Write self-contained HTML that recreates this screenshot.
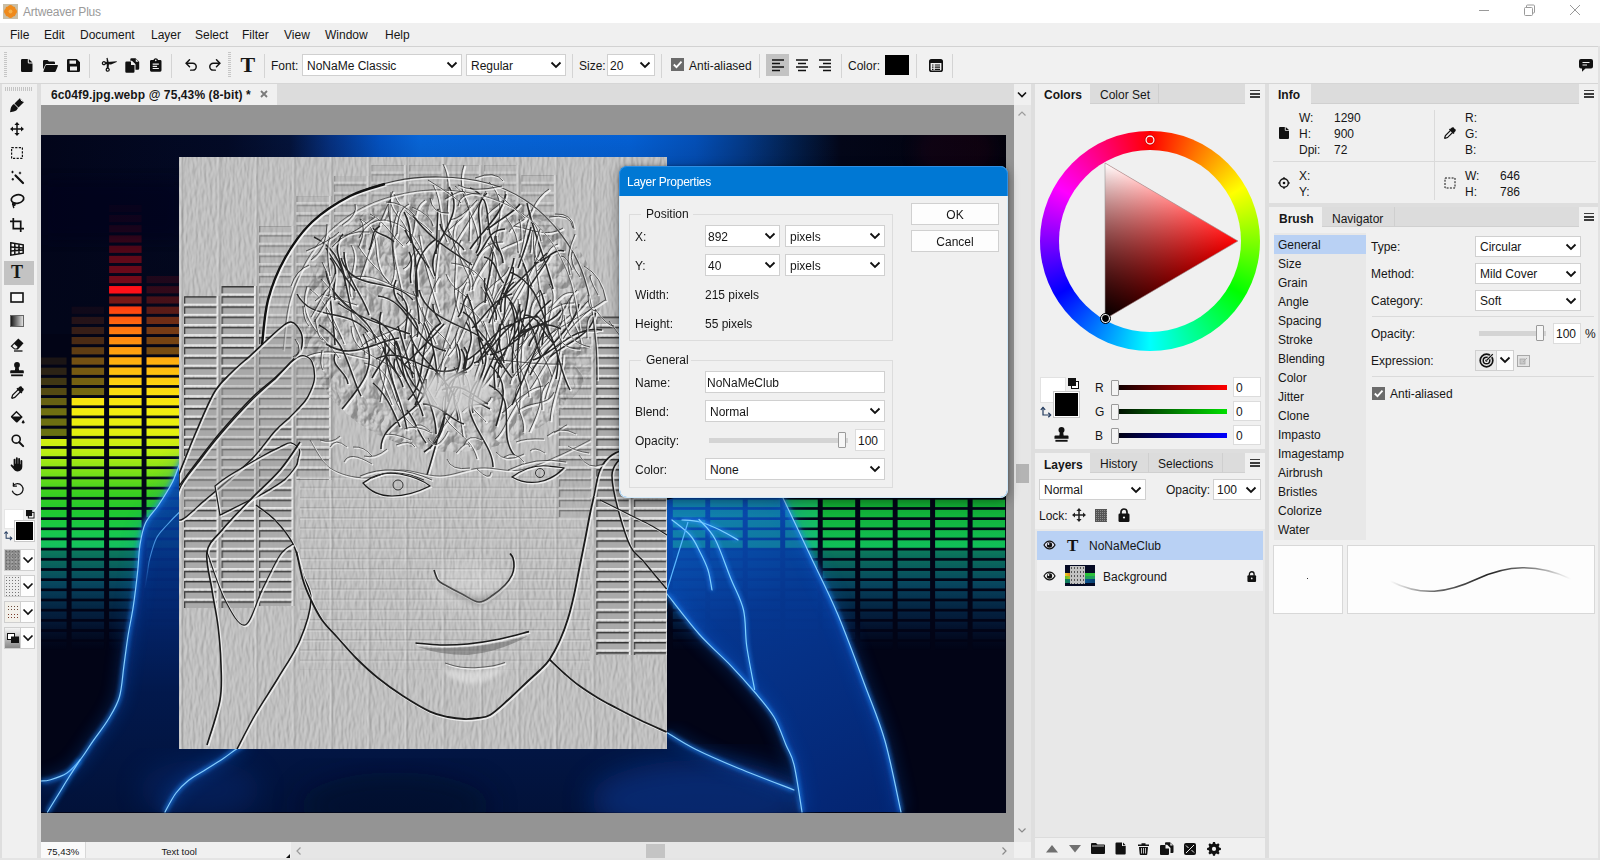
<!DOCTYPE html>
<html lang="en">
<head>
<meta charset="utf-8">
<title>Artweaver Plus</title>
<style>
*{box-sizing:border-box;margin:0;padding:0}
html,body{width:1600px;height:860px;overflow:hidden;background:#f0f0f0}
body{position:relative;font-family:"Liberation Sans",sans-serif;font-size:12px;color:#161616;line-height:12px}
.a{position:absolute}
.t{position:absolute;white-space:nowrap;line-height:12px;font-size:12px}
.b{font-weight:bold}
svg{position:absolute;overflow:visible}
.sep{position:absolute;width:1px;background:#d4d4d4}
.dd{position:absolute;background:#fff;border:1px solid #d0d0d0}
.dd .t{left:4px}
.chev{position:absolute;right:3px;top:50%;width:12px;height:8px;margin-top:-4px}
.tabbar{position:absolute;background:#dcdcdc;height:20px;border-bottom:1px solid #d0d0d0}
.tab{position:absolute;top:0;height:20px;border-right:1px solid #cfcfcf}
.tabon{position:absolute;top:0;height:21px;background:#f0f0f0}
.ham{position:absolute;width:10px;height:8px;background:linear-gradient(#3c3c3c 0 1.500px,transparent 1.500px 3.250px,#3c3c3c 3.250px 4.750px,transparent 4.750px 6.500px,#3c3c3c 6.500px 8px)}
</style>
</head>
<body>
<!-- title bar -->
<div class="a" style="left:0;top:0;width:1600px;height:23px;background:#fff"></div>
<svg style="left:3px;top:4px" width="15" height="15" viewBox="0 0 17 17"><rect width="17" height="17" fill="#c9bea6"/><g fill="#ef8a1c"><circle cx="8.5" cy="4.2" r="3"/><circle cx="8.5" cy="12.8" r="3"/><circle cx="4.2" cy="8.5" r="3"/><circle cx="12.8" cy="8.5" r="3"/><circle cx="5.4" cy="5.4" r="2.6"/><circle cx="11.6" cy="5.4" r="2.6"/><circle cx="5.4" cy="11.6" r="2.6"/><circle cx="11.6" cy="11.6" r="2.6"/></g><circle cx="8.5" cy="8.5" r="2.2" fill="#f6b04a"/></svg>
<div class="t" style="left:23px;top:6px;color:#9a9a9a;font-size:12px;letter-spacing:-.2px">Artweaver Plus</div>
<svg style="left:1476px;top:2px" width="110" height="18" viewBox="0 0 110 18" fill="none" stroke="#9a9a9a" stroke-width="1"><path d="M3 8.5h10"/><rect x="48.5" y="5.5" width="8" height="8" rx="1"/><path d="M50.5 5.5v-1.5a1 1 0 0 1 1-1h6a1 1 0 0 1 1 1v6a1 1 0 0 1-1 1h-1"/><path d="M94 3l10 10M104 3l-10 10"/></svg>
<!-- menu bar -->
<div class="a" style="left:0;top:23px;width:1600px;height:23px;background:#f0f0f0"></div>
<div class="t" style="left:10px;top:29px">File</div>
<div class="t" style="left:44px;top:29px">Edit</div>
<div class="t" style="left:80px;top:29px">Document</div>
<div class="t" style="left:151px;top:29px">Layer</div>
<div class="t" style="left:195px;top:29px">Select</div>
<div class="t" style="left:242px;top:29px">Filter</div>
<div class="t" style="left:284px;top:29px">View</div>
<div class="t" style="left:325px;top:29px">Window</div>
<div class="t" style="left:385px;top:29px">Help</div>
<!-- toolbar -->
<div class="a" style="left:0;top:46px;width:1600px;height:1px;background:#d2d2d2"></div>
<div class="a" style="left:0;top:47px;width:1600px;height:36px;background:#f1f1f1"></div>
<div class="a" style="left:0;top:83px;width:1600px;height:1px;background:#d6d6d6"></div>
<div class="a" style="left:4px;top:52px;width:3px;height:26px;background:repeating-linear-gradient(#c6c6c6 0 1px,transparent 1px 2px)"></div>
<div class="a" style="left:228px;top:52px;width:3px;height:26px;background:repeating-linear-gradient(#c6c6c6 0 1px,transparent 1px 2px)"></div>
<!-- new/open/save -->
<svg style="left:21px;top:59px" width="12" height="13" viewBox="0 0 12 13"><path d="M1.2 0h5.6v3.6a.8.8 0 0 0 .8.8H11.5v7.4a1.2 1.2 0 0 1-1.2 1.2H1.2A1.2 1.2 0 0 1 0 11.800V1.2A1.200 1.200 0 0 1 1.2 0z M7.800 0l3.700 3.500H7.800z" fill="#111"/></svg>
<svg style="left:43px;top:60px" width="15" height="12" viewBox="0 0 15 12"><path d="M0 1.200A1.200 1.200 0 0 1 1.200 0h3.300l1.500 1.500h4.800a1.200 1.200 0 0 1 1.200 1.200V4H3.600a1.500 1.500 0 0 0-1.400.9L0 9.500z M3.400 5h10.800a.7.700 0 0 1 .65 1l-2.100 5.200a1.200 1.200 0 0 1-1.100.8H.9a.5.500 0 0 1-.45-.7l2-5.600A1 1 0 0 1 3.400 5z" fill="#111"/></svg>
<svg style="left:67px;top:59px" width="13" height="13" viewBox="0 0 13 13"><path d="M1.300 0h8.500L13 3.200v8.500A1.300 1.300 0 0 1 11.700 13H1.300A1.300 1.300 0 0 1 0 11.700V1.300A1.300 1.300 0 0 1 1.300 0z M2.500 1.500v3.200h6.500V1.500z M3 7.500v4h7v-4z" fill="#111" fill-rule="evenodd"/></svg>
<div class="sep" style="left:89px;top:54px;height:24px"></div>
<!-- cut/copy/paste -->
<svg style="left:102px;top:58px" width="15" height="14" viewBox="0 0 15 14"><path d="M2.500 4.200L14.500 3.200a.5.500 0 0 1 .2.900L9 6.500 2.500 6z" fill="#111"/><path d="M4.700.2a.5.500 0 0 1 .9-.1L7 5.500 6.500 11 4.800 10.500z" fill="#111"/><circle cx="1.900" cy="5.200" r="1.500" fill="#f1f1f1" stroke="#111" stroke-width="1.300"/><circle cx="5.700" cy="11.700" r="1.500" fill="#f1f1f1" stroke="#111" stroke-width="1.300"/></svg>
<svg style="left:125px;top:58px" width="15" height="15" viewBox="0 0 15 15"><path d="M1.500 3.500h4.500v3.500h3.500v6.500a1.200 1.200 0 0 1-1.200 1.200H1.500A1.200 1.200 0 0 1 .3 13.500V4.700A1.200 1.200 0 0 1 1.500 3.500z" fill="#111"/><path d="M6.500.3h4l3.700 3.500v6.700a1.200 1.200 0 0 1-1.200 1.200h-2.500V6.300L6.800 2.800H5.300V1.500A1.200 1.200 0 0 1 6.500.3z" fill="#111"/><path d="M7 3.200l2.800 2.800H7z M10.800 1l2.800 2.700h-2.800z" fill="#f1f1f1"/></svg>
<svg style="left:149.500px;top:58px" width="11.500" height="14" viewBox="0 0 13 15"><path d="M1.500 1.800h2.300a2.800 2.800 0 0 1 5.400 0h2.300A1.500 1.500 0 0 1 13 3.300v10.200A1.500 1.500 0 0 1 11.500 15h-10A1.500 1.500 0 0 1 0 13.500V3.300A1.500 1.500 0 0 1 1.500 1.800z" fill="#111"/><circle cx="6.500" cy="2.300" r=".9" fill="#f1f1f1"/><path d="M3 6.500h7M3 9h5M3 11.500h7" stroke="#f1f1f1" stroke-width="1.300"/></svg>
<div class="sep" style="left:171px;top:54px;height:24px"></div>
<!-- undo / redo -->
<svg style="left:184.500px;top:59px" width="13" height="12" viewBox="0 0 15 14" fill="none" stroke="#111" stroke-width="1.700" stroke-linecap="round" stroke-linejoin="round"><path d="M5.200 1L1.200 5l4 4"/><path d="M1.500 5h7.500a4 4 0 0 1 0 8H6.500"/></svg>
<svg style="left:207.500px;top:59px" width="13" height="12" viewBox="0 0 15 14" fill="none" stroke="#111" stroke-width="1.700" stroke-linecap="round" stroke-linejoin="round"><path d="M9.800 1l4 4l-4 4"/><path d="M13.500 5H6a4 4 0 0 0 0 8h2.500"/></svg>
<!-- T -->
<div class="t" style="left:240.500px;top:54px;font-family:'Liberation Serif',serif;font-weight:bold;font-size:22px;line-height:22px">T</div>
<div class="sep" style="left:264px;top:54px;height:24px"></div>
<div class="t" style="left:271px;top:60px">Font:</div>
<div class="dd" style="left:302px;top:54px;width:160px;height:22px"><div class="t" style="top:5px">NoNaMe Classic</div><svg class="chev" viewBox="0 0 12 8"><path d="M1.500 1.500L6 6l4.500-4.500" fill="none" stroke="#111" stroke-width="1.800"/></svg></div>
<div class="dd" style="left:466px;top:54px;width:100px;height:22px"><div class="t" style="top:5px">Regular</div><svg class="chev" viewBox="0 0 12 8"><path d="M1.500 1.500L6 6l4.500-4.500" fill="none" stroke="#111" stroke-width="1.800"/></svg></div>
<div class="sep" style="left:572px;top:54px;height:24px"></div>
<div class="t" style="left:579px;top:60px">Size:</div>
<div class="dd" style="left:607px;top:54px;width:48px;height:22px"><div class="t" style="top:5px;left:2px">20</div><svg class="chev" style="right:3px" viewBox="0 0 12 8"><path d="M1.500 1.500L6 6l4.500-4.500" fill="none" stroke="#111" stroke-width="1.800"/></svg></div>
<div class="sep" style="left:661px;top:54px;height:24px"></div>
<div class="a" style="left:671px;top:58px;width:13px;height:13px;background:#6b6b6b"></div>
<svg style="left:671px;top:58px" width="13" height="13" viewBox="0 0 13 13"><path d="M2.800 6.500l2.700 2.700l5-5.500" fill="none" stroke="#fff" stroke-width="1.800"/></svg>
<div class="t" style="left:689px;top:60px">Anti-aliased</div>
<div class="sep" style="left:759px;top:54px;height:24px"></div>
<div class="a" style="left:766px;top:54px;width:23px;height:22px;background:#c3c3c3"></div>
<svg style="left:772px;top:59px" width="60" height="13" viewBox="0 0 60 13" stroke="#111" stroke-width="1.500"><path d="M0 1h12M0 4.500h8M0 8h12M0 11.500h8"/><path d="M24 1h12M26 4.500h8M24 8h12M26 11.500h8"/><path d="M47 1h12M51 4.500h8M47 8h12M51 11.500h8"/></svg>
<div class="sep" style="left:841px;top:54px;height:24px"></div>
<div class="t" style="left:848px;top:60px">Color:</div>
<div class="a" style="left:885px;top:54.500px;width:24px;height:20.700px;background:#000"></div>
<div class="sep" style="left:916px;top:54px;height:24px"></div>
<svg style="left:929px;top:59px" width="14" height="13" viewBox="0 0 14 13"><rect x=".8" y=".8" width="12.400" height="11.400" rx="1.800" fill="none" stroke="#111" stroke-width="1.600"/><rect x=".8" y=".8" width="12.400" height="3.200" fill="#111"/><path d="M3 6h1.500M5.800 6h5.200M3 8.200h1.500M5.800 8.200h5.200M3 10.300h1.500M5.800 10.300h5.200" stroke="#111" stroke-width="1.200"/></svg>
<div class="sep" style="left:952px;top:54px;height:24px"></div>
<svg style="left:1579px;top:59px" width="14" height="13" viewBox="0 0 14 13"><path d="M2 0h10a2 2 0 0 1 2 2v5.500a2 2 0 0 1-2 2H6.500L3 12.800V9.500H2a2 2 0 0 1-2-2V2A2 2 0 0 1 2 0z" fill="#111"/><path d="M3.500 3.500h7M3.500 6h4.500" stroke="#f1f1f1" stroke-width="1.200"/></svg>
<!-- left tool panel -->
<div class="a" style="left:0;top:84px;width:41px;height:776px;background:#dedede"></div>
<div class="a" style="left:2px;top:84px;width:35px;height:776px;background:#f0f0f0"></div>
<div class="a" style="left:5px;top:87px;width:27px;height:4px;background:repeating-linear-gradient(90deg,#c4c4c4 0 1px,transparent 1px 2px)"></div>
<div class="a" style="left:4px;top:261px;width:30px;height:24px;background:#c3c3c3"></div>
<!-- brush -->
<svg style="left:9px;top:97px" width="16" height="16" viewBox="0 0 16 16"><path d="M10.800 1.200l4 4-5.300 5.300-4-4z" fill="#111"/><path d="M5 7l4 4c-.8 2-2.500 3.200-4.200 3.500L1 15.200l.7-3.800C2 9.700 3.200 8 5 7z" fill="#111"/><path d="M11.500 2.500l2 2" stroke="#f0f0f0" stroke-width="1"/></svg>
<!-- move -->
<svg style="left:10px;top:122px" width="14" height="14" viewBox="0 0 14 14" fill="#111"><path d="M7 0l2.600 3h-5.200z M7 14l2.600-3h-5.200z M0 7l3-2.600v5.200z M14 7l-3-2.600v5.200z"/><path d="M7 2.500v9M2.500 7h9" stroke="#111" stroke-width="1.500"/></svg>
<!-- marquee -->
<svg style="left:11px;top:147px" width="12" height="12" viewBox="0 0 12 12"><rect x=".6" y=".6" width="10.800" height="10.800" fill="none" stroke="#111" stroke-width="1.200" stroke-dasharray="2.200 1.400"/></svg>
<!-- wand -->
<svg style="left:10px;top:170px" width="15" height="15" viewBox="0 0 15 15"><path d="M5.500 5.500l7.500 7.500" stroke="#111" stroke-width="2.200" stroke-linecap="round"/><path d="M2.500 0.800v2.400M1.300 2h2.400M10 1.800v2.400M8.800 3h2.400M2.800 8v2.400M1.600 9.200h2.400" stroke="#111" stroke-width="1.100"/></svg>
<!-- lasso -->
<svg style="left:9px;top:193px" width="16" height="16" viewBox="0 0 16 16" fill="none" stroke="#111" stroke-width="1.700"><ellipse cx="8.500" cy="6" rx="6.300" ry="4.200" transform="rotate(-12 8.500 6)"/><path d="M4.500 9.500c-1.500 1.500-1 3 .5 3s1.500-2 0-2.500c-1 1.500-1 3.500 0 5" stroke-width="1.400"/></svg>
<!-- crop -->
<svg style="left:10px;top:218px" width="14" height="14" viewBox="0 0 14 14" fill="none" stroke="#111" stroke-width="1.700"><path d="M3.300 0v10.700H14"/><path d="M0 3.300h10.700V14"/></svg>
<!-- perspective grid -->
<svg style="left:10px;top:242px" width="14" height="14" viewBox="0 0 14 14" fill="none" stroke="#111" stroke-width="1.500"><path d="M.8 .8L13.200 2.800v8.400L.8 13.200z"/><path d="M4.800 1.500v11M9 2.200v9.600M.8 4.900l12.400 1M.8 9.100l12.400-1"/></svg>
<!-- T -->
<div class="t" style="left:11px;top:263px;font-family:'Liberation Serif',serif;font-weight:bold;font-size:18px;line-height:18px">T</div>
<!-- rect -->
<svg style="left:10px;top:292px" width="14" height="11" viewBox="0 0 14 11"><rect x="1" y="1" width="12" height="9" fill="#f8f8f8" stroke="#111" stroke-width="1.600"/></svg>
<!-- gradient -->
<svg style="left:10px;top:315px" width="14" height="12" viewBox="0 0 14 12"><defs><linearGradient id="tg"><stop offset="0" stop-color="#111"/><stop offset="1" stop-color="#e8e8e8"/></linearGradient></defs><rect x=".5" y=".5" width="13" height="11" fill="url(#tg)" stroke="#666" stroke-width="1"/></svg>
<!-- eraser -->
<svg style="left:10px;top:338px" width="14" height="14" viewBox="0 0 14 14"><path d="M8.300.6l5.200 4.600-5.600 6.300H4.400L.6 8.300z" fill="#111"/><path d="M2.300 8.300l2-2.200 3.400 3-1.300 1.500H4.800z" fill="#f0f0f0"/><path d="M4 13h8.500" stroke="#111" stroke-width="1.300"/></svg>
<!-- stamp -->
<svg style="left:10px;top:362px" width="14" height="14.500" viewBox="0 0 15 16" fill="#111"><circle cx="7.500" cy="3.300" r="3.200"/><path d="M5.800 5h3.400l.6 4H14a1 1 0 0 1 1 1v2.500H0V10a1 1 0 0 1 1-1h4.200z"/><rect x="1" y="13.700" width="13" height="2"/></svg>
<!-- eyedropper -->
<svg style="left:10px;top:386px" width="14" height="14" viewBox="0 0 16 16"><path d="M10 3.500l2.500 2.500-7 7-3 1-.5-.5 1-3z" fill="#f0f0f0" stroke="#111" stroke-width="1.400"/><path d="M9 2.500l1.500-1.500a2 2 0 0 1 3.500 1a2 2 0 0 1 1 3.500L13.500 7z" fill="#111"/><path d="M8 2.500l5.500 5.500" stroke="#111" stroke-width="1.800"/></svg>
<!-- bucket -->
<svg style="left:10px;top:410px" width="15" height="14" viewBox="0 0 17 16"><path d="M7.300.8l7.200 7.200-6 6a1.200 1.200 0 0 1-1.700 0L1.300 8.500a1.200 1.200 0 0 1 0-1.700z" fill="#111"/><path d="M3 7.300l4.300-4.300 4.500 4.300z" fill="#f0f0f0"/><path d="M15 11c1 1.500 1.500 2.300 1.500 3a1.500 1.500 0 0 1-3 0c0-.7.500-1.500 1.500-3z" fill="#111"/></svg>
<!-- zoom -->
<svg style="left:11px;top:434px" width="13" height="13" viewBox="0 0 15 15" fill="none" stroke="#111"><circle cx="6" cy="6" r="4.600" stroke-width="1.900"/><path d="M9.500 9.500l4.500 4.500" stroke-width="2.400" stroke-linecap="round"/></svg>
<!-- hand -->
<svg style="left:10px;top:457px" width="13.500" height="14.500" viewBox="0 0 16 17" fill="#111"><path d="M4.300 3a1.100 1.100 0 0 1 2.200 0v5h.5V1.300a1.100 1.100 0 0 1 2.200 0V8h.5V2.300a1.100 1.100 0 0 1 2.200 0V8.500h.5V4.500a1.100 1.100 0 0 1 2.200 0v7c0 3-2 5.500-5.500 5.500-2.500 0-3.800-1-5-2.800L1 10.500c-.8-1.200.6-2.200 1.600-1.300l1.700 1.700z"/></svg>
<!-- rotate -->
<svg style="left:10px;top:482px" width="15" height="14" viewBox="0 0 17 16" fill="none" stroke="#111" stroke-width="1.400"><path d="M3.500 4.500a6.300 6.300 0 1 1-1 5.500"/><path d="M3.800.8v4h4" stroke-linejoin="round"/></svg>
<!-- fg/bg -->
<div class="a" style="left:4px;top:509px;width:20px;height:20px;background:#fff;border:1px solid #e6e6e6"></div>
<div class="a" style="left:14px;top:520px;width:21px;height:22px;background:#000;border:1px solid #c8c8c8;box-shadow:inset 0 0 0 1px #fff"></div>
<svg style="left:26px;top:510px" width="8.500" height="8.500" viewBox="0 0 9 9"><rect x="2.500" y="2.500" width="6" height="6" fill="#fff" stroke="#111" stroke-width="1"/><rect x="0" y="0" width="6.500" height="6.500" fill="#111"/></svg>
<svg style="left:4px;top:531px" width="8.500" height="9.500" viewBox="0 0 10 11" fill="none" stroke="#223a5e" stroke-width="1.200"><path d="M2.500 1v7.500H9"/><path d="M.5 3L2.500.8l2 2.200M7 6.500l2.200 2L7 10.500"/></svg>
<!-- preset buttons -->
<div class="a" style="left:4px;top:549px;width:31px;height:22px;background:#fdfdfd;border:1px solid #cfcfcf"></div>
<div class="a" style="left:5px;top:550px;width:16px;height:20px;background:#8a8a8a;background-image:radial-gradient(#6a6a6a 30%,transparent 31%),radial-gradient(#a2a2a2 30%,transparent 31%);background-size:3px 3px,4px 4px;background-position:0 0,1px 2px;border-right:1px solid #cfcfcf"></div>
<div class="a" style="left:4px;top:575px;width:31px;height:22px;background:#fdfdfd;border:1px solid #cfcfcf"></div>
<div class="a" style="left:5px;top:576px;width:16px;height:20px;background:#ececec;background-image:radial-gradient(#777 25%,transparent 30%);background-size:3px 3px;border-right:1px solid #cfcfcf"></div>
<div class="a" style="left:4px;top:601px;width:31px;height:22px;background:#fdfdfd;border:1px solid #cfcfcf"></div>
<div class="a" style="left:5px;top:602px;width:16px;height:20px;background:#f2f0ea;border-right:1px solid #cfcfcf"></div>
<div class="a" style="left:7px;top:605px;width:12px;height:6px;background-image:radial-gradient(#6b4a3a 35%,transparent 40%);background-size:3px 3px"></div>
<div class="a" style="left:7px;top:613px;width:12px;height:6px;background-image:radial-gradient(#7a3a2a 35%,transparent 40%);background-size:3px 3px"></div>
<div class="a" style="left:4px;top:627px;width:31px;height:22px;background:#fdfdfd;border:1px solid #cfcfcf"></div>
<div class="a" style="left:5px;top:628px;width:16px;height:20px;background:linear-gradient(#f4f4f4,#888);border-right:1px solid #cfcfcf"></div>
<svg style="left:7px;top:633px" width="12" height="10" viewBox="0 0 12 10"><rect x=".5" y=".5" width="7" height="6" fill="#fff" stroke="#111" stroke-width="1"/><rect x="4" y="3.500" width="8" height="6.500" fill="#111"/></svg>
<svg style="left:22px;top:549px" width="12" height="100" viewBox="0 0 12 100" fill="none" stroke="#111" stroke-width="1.700"><path d="M1.500 8.500L6 13l4.500-4.500M1.500 34.500L6 39l4.500-4.500M1.500 60.500L6 65l4.500-4.500M1.500 86.500L6 91l4.500-4.500"/></svg>
<!-- document tab row -->
<div class="a" style="left:41px;top:84px;width:973px;height:21px;background:#dcdcdc"></div>
<div class="a" style="left:41px;top:84px;width:236px;height:21px;background:#f0f0f0"></div>
<div class="t b" style="left:51px;top:88.500px;letter-spacing:.1px">6c04f9.jpg.webp @ 75,43% (8-bit) *</div>
<svg style="left:260px;top:90px" width="8" height="8" viewBox="0 0 8 8"><path d="M1 1l6 6M7 1l-6 6" stroke="#7a7a7a" stroke-width="1.800"/></svg>
<!-- canvas viewport background -->
<div class="a" style="left:41px;top:105px;width:973px;height:737px;background:#949494"></div>
<!-- vertical scrollbar column -->
<div class="a" style="left:1014px;top:84px;width:17px;height:757px;background:#f0f0f0"></div>
<div class="a" style="left:1014px;top:105px;width:17px;height:737px;background:#e6e6e6"></div>
<div class="a" style="left:1031px;top:84px;width:4px;height:776px;background:#dedede"></div>
<svg style="left:1016px;top:90px" width="12" height="100" viewBox="0 0 12 100" fill="none"><path d="M2 2.500L6 6.500l4-4" stroke="#111" stroke-width="1.600"/><path d="M2.500 25.500L6 22l3.500 3.500" stroke="#9c9c9c" stroke-width="1.200"/></svg>
<svg style="left:1016px;top:825px" width="12" height="10" viewBox="0 0 12 10" fill="none"><path d="M2.500 3.500L6 7l3.500-3.500" stroke="#8a8a8a" stroke-width="1.200"/></svg>
<div class="a" style="left:1016px;top:464px;width:13px;height:19px;background:#b4b4b4"></div>
<!-- status bar -->
<div class="a" style="left:41px;top:842px;width:990px;height:18px;background:#f0f0f0"></div>
<div class="a" style="left:41px;top:842px;width:45px;height:18px;background:#fafafa;border-right:1px solid #d8d8d8"></div>
<div class="t" style="left:47px;top:847px;font-size:9.500px;line-height:10px">75,43%</div>
<div class="t" style="left:161.500px;top:847px;font-size:9.500px;line-height:10px">Text tool</div>
<svg style="left:285.500px;top:854px" width="4" height="4" viewBox="0 0 6 6"><path d="M6 0v6H0z" fill="#111"/></svg>
<div class="a" style="left:291px;top:842px;width:723px;height:18px;background:#e6e6e6"></div>
<svg style="left:294px;top:845px" width="10" height="12" viewBox="0 0 10 12" fill="none"><path d="M6.500 2.500L3 6l3.500 3.500" stroke="#9a9a9a" stroke-width="1.200"/></svg>
<svg style="left:999px;top:845px" width="10" height="12" viewBox="0 0 10 12" fill="none"><path d="M3.500 2.500L7 6L3.500 9.500" stroke="#8a8a8a" stroke-width="1.200"/></svg>
<div class="a" style="left:646px;top:844px;width:19px;height:14px;background:#c4c4c4"></div>
<!-- artwork -->
<svg style="left:41px;top:135px" width="965" height="678" viewBox="41 135 965 678">
<defs>
<clipPath id="cv"><rect x="41" y="135" width="965" height="678"/></clipPath>
<linearGradient id="eqc" gradientUnits="userSpaceOnUse" x1="0" y1="190" x2="0" y2="548"><stop offset="0.000" stop-color="#5a0010"/><stop offset="0.268" stop-color="#ff1018"/><stop offset="0.324" stop-color="#ff3a10"/><stop offset="0.380" stop-color="#ff7010"/><stop offset="0.439" stop-color="#ff9a10"/><stop offset="0.494" stop-color="#ffb810"/><stop offset="0.553" stop-color="#fcd810"/><stop offset="0.609" stop-color="#f6ec10"/><stop offset="0.676" stop-color="#e4f010"/><stop offset="0.732" stop-color="#bcee14"/><stop offset="0.788" stop-color="#7ce018"/><stop offset="0.844" stop-color="#3cd020"/><stop offset="0.899" stop-color="#20c830"/><stop offset="0.955" stop-color="#18c84c"/><stop offset="1.000" stop-color="#14c060"/></linearGradient>
<linearGradient id="eqr" gradientUnits="userSpaceOnUse" x1="0" y1="470" x2="0" y2="550"><stop offset="0" stop-color="#12a02a"/><stop offset=".4" stop-color="#12ac32"/><stop offset=".7" stop-color="#12b844"/><stop offset="1" stop-color="#10c05c"/></linearGradient>
<linearGradient id="refl" gradientUnits="userSpaceOnUse" x1="0" y1="550" x2="0" y2="650"><stop offset="0" stop-color="#0b7a5c"/><stop offset=".35" stop-color="#08506a" stop-opacity=".85"/><stop offset=".7" stop-color="#063460" stop-opacity=".45"/><stop offset="1" stop-color="#04204a" stop-opacity="0"/></linearGradient>
<pattern id="rows" patternUnits="userSpaceOnUse" x="0" y="143.70" width="1200" height="10.17"><rect width="1200" height="7.500" fill="#fff"/></pattern>
<mask id="rowm" maskUnits="userSpaceOnUse" x="0" y="100" width="1200" height="800"><rect x="0" y="100" width="1200" height="800" fill="url(#rows)"/></mask>
<linearGradient id="topb" gradientUnits="userSpaceOnUse" x1="41" y1="0" x2="1006" y2="0"><stop offset="0" stop-color="#02051a"/><stop offset=".193" stop-color="#030a26"/><stop offset=".258" stop-color="#04133a"/><stop offset=".30" stop-color="#06307e"/><stop offset=".351" stop-color="#0452c0"/><stop offset=".393" stop-color="#0866d8"/><stop offset=".61" stop-color="#0460d4"/><stop offset=".678" stop-color="#0450b8"/><stop offset=".728" stop-color="#043a88"/><stop offset=".778" stop-color="#02204e"/><stop offset=".829" stop-color="#030618"/><stop offset="1" stop-color="#02020c"/></linearGradient>
<linearGradient id="topf" gradientUnits="userSpaceOnUse" x1="0" y1="134" x2="0" y2="330"><stop offset="0" stop-color="#02061a" stop-opacity="0"/><stop offset=".25" stop-color="#02061a" stop-opacity=".15"/><stop offset="1" stop-color="#02061a" stop-opacity="1"/></linearGradient>
<linearGradient id="bodyL" gradientUnits="userSpaceOnUse" x1="0" y1="470" x2="0" y2="812"><stop offset="0" stop-color="#0846b0"/><stop offset=".3" stop-color="#042c7e"/><stop offset=".65" stop-color="#021a50"/><stop offset="1" stop-color="#02133c"/></linearGradient>
<linearGradient id="armR" gradientUnits="userSpaceOnUse" x1="700" y1="500" x2="860" y2="812"><stop offset="0" stop-color="#0a54c0"/><stop offset=".35" stop-color="#063a98"/><stop offset="1" stop-color="#04287a"/></linearGradient>
<linearGradient id="botb" gradientUnits="userSpaceOnUse" x1="0" y1="740" x2="0" y2="812"><stop offset="0" stop-color="#02143e"/><stop offset="1" stop-color="#031c52"/></linearGradient>
<filter id="glow" x="-20%" y="-20%" width="140%" height="140%"><feGaussianBlur stdDeviation="2.200"/></filter>
<filter id="glow2" x="-20%" y="-20%" width="140%" height="140%"><feGaussianBlur stdDeviation="8"/></filter>
<filter id="soft" x="-20%" y="-20%" width="140%" height="140%"><feGaussianBlur stdDeviation="14"/></filter>
<filter id="emb" x="0" y="0" width="100%" height="100%" color-interpolation-filters="sRGB"><feTurbulence type="fractalNoise" baseFrequency="0.35 0.09" numOctaves="2" seed="3" result="n"/><feDiffuseLighting in="n" surfaceScale="1.100" diffuseConstant="1" lighting-color="#fff" result="l"><feDistantLight azimuth="200" elevation="52"/></feDiffuseLighting><feColorMatrix in="l" type="matrix" values="1 0 0 0 -0.05  0 1 0 0 -0.05  0 0 1 0 -0.05  0 0 0 1 0"/></filter>
<filter id="emb2" x="0" y="0" width="100%" height="100%" color-interpolation-filters="sRGB"><feTurbulence type="turbulence" baseFrequency="0.06 0.045" numOctaves="3" seed="11" result="n"/><feDiffuseLighting in="n" surfaceScale="7" diffuseConstant="1" lighting-color="#fff" result="l"><feDistantLight azimuth="215" elevation="45"/></feDiffuseLighting></filter>
<pattern id="erow" patternUnits="userSpaceOnUse" x="34.1" y="143.70" width="37.480" height="10.17"><rect x="0" y="0" width="32.500" height="7.600" fill="#a9a9a9"/><rect x="0" y="0" width="32.500" height="1.400" fill="#2c2c2c"/><rect x="0" y="0" width="1.300" height="7.600" fill="#3a3a3a"/><rect x="0" y="7.600" width="33.500" height="1.300" fill="#f8f8f8"/><rect x="32.500" y="0" width="1.400" height="8.500" fill="#f4f4f4"/><rect x="34.500" y="0" width="1.200" height="10.170" fill="#8a8a8a"/></pattern>
<pattern id="frow" patternUnits="userSpaceOnUse" x="0" y="143.70" width="1200" height="10.17"><rect y="7.800" width="1200" height="1" fill="#6a6a6a"/><rect y="8.800" width="1200" height="1" fill="#ececec"/></pattern>
<pattern id="vcol" patternUnits="userSpaceOnUse" x="34.1" y="0" width="37.480" height="900"><rect x="33" width="1.600" height="900" fill="#f0f0f0"/><rect x="35.200" width="1.600" height="900" fill="#7a7a7a"/></pattern>
<clipPath id="gr"><rect x="179" y="157" width="488" height="592"/></clipPath>
<radialGradient id="headg" gradientUnits="userSpaceOnUse" cx="450" cy="320" r="170"><stop offset="0" stop-color="#fff" stop-opacity="1"/><stop offset=".8" stop-color="#fff" stop-opacity="1"/><stop offset="1" stop-color="#fff" stop-opacity="0"/></radialGradient>
<mask id="headm" maskUnits="userSpaceOnUse" x="179" y="157" width="488" height="592"><ellipse cx="452" cy="320" rx="150" ry="132" fill="url(#headg)"/></mask>
</defs>
<g clip-path="url(#cv)">
<rect x="41" y="134" width="965" height="680" fill="#020416"/>
<rect x="41" y="134" width="965" height="200" fill="url(#topb)"/>
<rect x="41" y="134" width="965" height="200" fill="url(#topf)"/>
<ellipse cx="955" cy="150" rx="40" ry="30" fill="#3a0418" opacity=".22" filter="url(#glow2)"/>
<g mask="url(#rowm)">
<rect x="34.1" y="428.5" width="32.500" height="7.600" fill="#e3f010" opacity="0.46"/>
<rect x="34.1" y="418.3" width="32.500" height="7.600" fill="#ebee10" opacity="0.46"/>
<rect x="34.1" y="408.1" width="32.500" height="7.600" fill="#f3ed10" opacity="0.46"/>
<rect x="34.1" y="397.9" width="32.500" height="7.600" fill="#f8e610" opacity="0.41"/>
<rect x="34.1" y="387.8" width="32.500" height="7.600" fill="#fbdc10" opacity="0.33"/>
<rect x="34.1" y="377.6" width="32.500" height="7.600" fill="#fdce10" opacity="0.25"/>
<rect x="34.1" y="367.4" width="32.500" height="7.600" fill="#febf10" opacity="0.17"/>
<rect x="34.1" y="357.3" width="32.500" height="7.600" fill="#ffaf10" opacity="0.10"/>
<rect x="34.1" y="439.0" width="32.500" height="110.5" fill="url(#eqc)"/>
<rect x="34.1" y="550" width="32.500" height="110" fill="url(#refl)"/>
<rect x="71.6" y="387.8" width="32.500" height="7.600" fill="#fbdc10" opacity="0.46"/>
<rect x="71.6" y="377.6" width="32.500" height="7.600" fill="#fdce10" opacity="0.46"/>
<rect x="71.6" y="367.4" width="32.500" height="7.600" fill="#febf10" opacity="0.46"/>
<rect x="71.6" y="357.3" width="32.500" height="7.600" fill="#ffaf10" opacity="0.45"/>
<rect x="71.6" y="347.1" width="32.500" height="7.600" fill="#ffa010" opacity="0.37"/>
<rect x="71.6" y="336.9" width="32.500" height="7.600" fill="#ff8e10" opacity="0.29"/>
<rect x="71.6" y="326.8" width="32.500" height="7.600" fill="#ff7a10" opacity="0.21"/>
<rect x="71.6" y="316.6" width="32.500" height="7.600" fill="#ff6110" opacity="0.14"/>
<rect x="71.6" y="306.4" width="32.500" height="7.600" fill="#ff4610" opacity="0.06"/>
<rect x="71.6" y="397.0" width="32.500" height="152.5" fill="url(#eqc)"/>
<rect x="71.6" y="550" width="32.500" height="110" fill="url(#refl)"/>
<rect x="109.1" y="296.2" width="32.500" height="7.600" fill="#ff2e12" opacity="0.46"/>
<rect x="109.1" y="286.1" width="32.500" height="7.600" fill="#ff1916" opacity="0.46"/>
<rect x="109.1" y="275.9" width="32.500" height="7.600" fill="#f50f17" opacity="0.46"/>
<rect x="109.1" y="265.7" width="32.500" height="7.600" fill="#e30d17" opacity="0.46"/>
<rect x="109.1" y="255.6" width="32.500" height="7.600" fill="#d20c16" opacity="0.46"/>
<rect x="109.1" y="245.4" width="32.500" height="7.600" fill="#c00a15" opacity="0.43"/>
<rect x="109.1" y="235.2" width="32.500" height="7.600" fill="#af0814" opacity="0.36"/>
<rect x="109.1" y="225.1" width="32.500" height="7.600" fill="#9d0713" opacity="0.28"/>
<rect x="109.1" y="214.9" width="32.500" height="7.600" fill="#8c0512" opacity="0.20"/>
<rect x="109.1" y="204.7" width="32.500" height="7.600" fill="#7a0312" opacity="0.12"/>
<rect x="109.1" y="305.0" width="32.500" height="244.5" fill="url(#eqc)"/>
<rect x="109.1" y="550" width="32.500" height="110" fill="url(#refl)"/>
<rect x="146.5" y="347.1" width="32.500" height="7.600" fill="#ffa010" opacity="0.46"/>
<rect x="146.5" y="336.9" width="32.500" height="7.600" fill="#ff8e10" opacity="0.46"/>
<rect x="146.5" y="326.8" width="32.500" height="7.600" fill="#ff7a10" opacity="0.46"/>
<rect x="146.5" y="316.6" width="32.500" height="7.600" fill="#ff6110" opacity="0.43"/>
<rect x="146.5" y="306.4" width="32.500" height="7.600" fill="#ff4610" opacity="0.35"/>
<rect x="146.5" y="296.2" width="32.500" height="7.600" fill="#ff2e12" opacity="0.27"/>
<rect x="146.5" y="286.1" width="32.500" height="7.600" fill="#ff1916" opacity="0.19"/>
<rect x="146.5" y="275.9" width="32.500" height="7.600" fill="#f50f17" opacity="0.12"/>
<rect x="146.5" y="356.0" width="32.500" height="193.5" fill="url(#eqc)"/>
<rect x="146.5" y="550" width="32.500" height="110" fill="url(#refl)"/>
<rect x="109.1" y="285" width="32.500" height="9" fill="#ff1018"/>
<rect x="635.3" y="470" width="32.500" height="80" fill="url(#eqr)"/>
<rect x="635.3" y="550" width="32.500" height="115" fill="url(#refl)"/>
<rect x="672.8" y="470" width="32.500" height="80" fill="url(#eqr)"/>
<rect x="672.8" y="550" width="32.500" height="115" fill="url(#refl)"/>
<rect x="710.2" y="470" width="32.500" height="80" fill="url(#eqr)"/>
<rect x="710.2" y="550" width="32.500" height="115" fill="url(#refl)"/>
<rect x="747.7" y="470" width="32.500" height="80" fill="url(#eqr)"/>
<rect x="747.7" y="550" width="32.500" height="115" fill="url(#refl)"/>
<rect x="785.2" y="470" width="32.500" height="80" fill="url(#eqr)"/>
<rect x="785.2" y="550" width="32.500" height="115" fill="url(#refl)"/>
<rect x="822.7" y="470" width="32.500" height="80" fill="url(#eqr)"/>
<rect x="822.7" y="550" width="32.500" height="115" fill="url(#refl)"/>
<rect x="860.2" y="470" width="32.500" height="80" fill="url(#eqr)"/>
<rect x="860.2" y="550" width="32.500" height="115" fill="url(#refl)"/>
<rect x="897.6" y="470" width="32.500" height="80" fill="url(#eqr)"/>
<rect x="897.6" y="550" width="32.500" height="115" fill="url(#refl)"/>
<rect x="935.1" y="470" width="32.500" height="80" fill="url(#eqr)"/>
<rect x="935.1" y="550" width="32.500" height="115" fill="url(#refl)"/>
<rect x="972.6" y="470" width="32.500" height="80" fill="url(#eqr)"/>
<rect x="972.6" y="550" width="32.500" height="115" fill="url(#refl)"/>
</g>
<rect x="41" y="180" width="140" height="60" fill="#02061a" opacity=".5" filter="url(#glow2)"/>
<path d="M41.0 781.0C42.5 780.8 45.4 781.3 49.7 780.0C54.0 778.7 62.0 776.3 67.0 773.0C72.0 769.7 75.6 765.4 80.0 760.0C84.4 754.6 88.5 747.4 93.3 740.6C98.0 733.8 104.2 726.3 108.5 719.0C112.8 711.7 116.9 705.7 119.4 697.0C122.0 688.3 122.4 676.8 123.8 666.6C125.2 656.4 126.4 646.2 128.0 636.0C129.6 625.8 131.8 616.5 133.4 605.6C135.0 594.7 136.6 580.9 137.7 570.7C138.8 560.5 138.7 552.6 140.0 544.6C141.3 536.6 142.5 529.4 145.6 522.8C148.7 516.2 154.2 511.5 158.6 505.0C162.9 498.5 168.2 490.4 171.7 483.6C175.2 476.8 177.5 468.8 179.6 464.0C181.7 459.2 183.3 456.5 184.0 455.0L184 455L667 455L667 732C672.2 735.7 683.1 743.1 695.0 749.0C706.9 754.9 722.5 761.7 739.0 768.5C755.5 775.3 784.8 786.4 794.0 790.0L802 812L41 812z" fill="url(#bodyL)" opacity=".94"/><ellipse cx="395" cy="806" rx="95" ry="34" fill="#010826" opacity=".5" filter="url(#soft)"/><ellipse cx="700" cy="800" rx="110" ry="40" fill="#0a3ca0" opacity=".5" filter="url(#soft)"/><ellipse cx="200" cy="790" rx="60" ry="30" fill="#0a3ca0" opacity=".25" filter="url(#soft)"/>
<path d="M667 500L770 470C772.3 475.0 777.3 485.8 784.0 500.0C790.7 514.2 801.1 536.0 810.0 555.0C818.9 574.0 828.4 592.2 837.6 614.0C846.8 635.8 857.1 664.3 865.0 685.5C872.9 706.7 879.0 719.9 885.0 741.0C891.0 762.1 898.3 800.2 901.0 812.0L802 812L802.0 812.0L794.0 764.6L786.0 745.0L774.0 717.0L754.6 692.0L731.0 665.8L699.0 634.0L667.0 594.0z" fill="url(#armR)" opacity=".93"/>
<g mask="url(#rowm)" opacity=".35">
<rect x="672.8" y="490" width="32.500" height="60" fill="#20c8a0"/>
<rect x="710.2" y="490" width="32.500" height="60" fill="#20c8a0"/>
<rect x="747.7" y="490" width="32.500" height="60" fill="#20c8a0"/>
<rect x="785.2" y="490" width="32.500" height="60" fill="#20c8a0"/>
</g>
<path d="M41.0 781.0C42.5 780.8 45.4 781.3 49.7 780.0C54.0 778.7 62.0 776.3 67.0 773.0C72.0 769.7 75.6 765.4 80.0 760.0C84.4 754.6 88.5 747.4 93.3 740.6C98.0 733.8 104.2 726.3 108.5 719.0C112.8 711.7 116.9 705.7 119.4 697.0C122.0 688.3 122.4 676.8 123.8 666.6C125.2 656.4 126.4 646.2 128.0 636.0C129.6 625.8 131.8 616.5 133.4 605.6C135.0 594.7 136.6 580.9 137.7 570.7C138.8 560.5 138.7 552.6 140.0 544.6C141.3 536.6 142.5 529.4 145.6 522.8C148.7 516.2 154.2 511.5 158.6 505.0C162.9 498.5 168.2 490.4 171.7 483.6C175.2 476.8 177.5 468.8 179.6 464.0C181.7 459.2 183.3 456.5 184.0 455.0" fill="none" stroke="#1468e0" stroke-width="9" opacity=".3" filter="url(#glow2)"/>
<path d="M165.0 812.0C166.8 808.8 172.0 798.3 176.0 793.0C180.0 787.7 183.9 784.0 189.0 780.0C194.1 776.0 200.8 772.7 206.6 769.0C212.4 765.3 219.3 761.2 224.0 758.0C228.7 754.8 231.5 752.3 235.0 750.0C238.5 747.7 243.3 745.0 245.0 744.0" fill="none" stroke="#1468e0" stroke-width="9" opacity=".3" filter="url(#glow2)"/>
<path d="M667.0 594.0C672.3 600.7 688.3 622.0 699.0 634.0C709.7 646.0 721.7 656.1 731.0 665.8C740.3 675.5 747.4 683.5 754.6 692.0C761.8 700.5 768.8 708.2 774.0 717.0C779.2 725.8 782.7 737.1 786.0 745.0C789.3 752.9 791.3 753.4 794.0 764.6C796.7 775.8 800.7 804.1 802.0 812.0" fill="none" stroke="#1468e0" stroke-width="9" opacity=".3" filter="url(#glow2)"/>
<path d="M770.0 470.0C772.3 475.0 777.3 485.8 784.0 500.0C790.7 514.2 801.1 536.0 810.0 555.0C818.9 574.0 828.4 592.2 837.6 614.0C846.8 635.8 857.1 664.3 865.0 685.5C872.9 706.7 879.0 719.9 885.0 741.0C891.0 762.1 898.3 800.2 901.0 812.0" fill="none" stroke="#1468e0" stroke-width="9" opacity=".3" filter="url(#glow2)"/>
<path d="M667.7 733.0C672.2 735.7 683.1 743.1 695.0 749.0C706.9 754.9 722.5 761.7 739.0 768.5C755.5 775.3 784.8 786.4 794.0 790.0" fill="none" stroke="#1468e0" stroke-width="9" opacity=".3" filter="url(#glow2)"/>
<path d="M41.0 781.0C42.5 780.8 45.4 781.3 49.7 780.0C54.0 778.7 62.0 776.3 67.0 773.0C72.0 769.7 75.6 765.4 80.0 760.0C84.4 754.6 88.5 747.4 93.3 740.6C98.0 733.8 104.2 726.3 108.5 719.0C112.8 711.7 116.9 705.7 119.4 697.0C122.0 688.3 122.4 676.8 123.8 666.6C125.2 656.4 126.4 646.2 128.0 636.0C129.6 625.8 131.8 616.5 133.4 605.6C135.0 594.7 136.6 580.9 137.7 570.7C138.8 560.5 138.7 552.6 140.0 544.6C141.3 536.6 142.5 529.4 145.6 522.8C148.7 516.2 154.2 511.5 158.6 505.0C162.9 498.5 168.2 490.4 171.7 483.6C175.2 476.8 177.5 468.8 179.6 464.0C181.7 459.2 183.3 456.5 184.0 455.0" fill="none" stroke="#1e84f6" stroke-width="4.5" opacity=".7" filter="url(#glow)"/>
<path d="M41.0 781.0C42.5 780.8 45.4 781.3 49.7 780.0C54.0 778.7 62.0 776.3 67.0 773.0C72.0 769.7 75.6 765.4 80.0 760.0C84.4 754.6 88.5 747.4 93.3 740.6C98.0 733.8 104.2 726.3 108.5 719.0C112.8 711.7 116.9 705.7 119.4 697.0C122.0 688.3 122.4 676.8 123.8 666.6C125.2 656.4 126.4 646.2 128.0 636.0C129.6 625.8 131.8 616.5 133.4 605.6C135.0 594.7 136.6 580.9 137.7 570.7C138.8 560.5 138.7 552.6 140.0 544.6C141.3 536.6 142.5 529.4 145.6 522.8C148.7 516.2 154.2 511.5 158.6 505.0C162.9 498.5 168.2 490.4 171.7 483.6C175.2 476.8 177.5 468.8 179.6 464.0C181.7 459.2 183.3 456.5 184.0 455.0" fill="none" stroke="#86ccfc" stroke-width="1.2" stroke-linecap="round"/>
<path d="M47.5 812.0C49.2 809.2 54.4 800.8 58.0 795.0C61.6 789.2 65.3 782.8 69.0 777.0C72.7 771.2 78.2 762.8 80.0 760.0" fill="none" stroke="#1e84f6" stroke-width="4.5" opacity=".7" filter="url(#glow)"/>
<path d="M47.5 812.0C49.2 809.2 54.4 800.8 58.0 795.0C61.6 789.2 65.3 782.8 69.0 777.0C72.7 771.2 78.2 762.8 80.0 760.0" fill="none" stroke="#86ccfc" stroke-width="1.2" stroke-linecap="round"/>
<path d="M165.0 812.0C166.8 808.8 172.0 798.3 176.0 793.0C180.0 787.7 183.9 784.0 189.0 780.0C194.1 776.0 200.8 772.7 206.6 769.0C212.4 765.3 219.3 761.2 224.0 758.0C228.7 754.8 231.5 752.3 235.0 750.0C238.5 747.7 243.3 745.0 245.0 744.0" fill="none" stroke="#1e84f6" stroke-width="4.5" opacity=".7" filter="url(#glow)"/>
<path d="M165.0 812.0C166.8 808.8 172.0 798.3 176.0 793.0C180.0 787.7 183.9 784.0 189.0 780.0C194.1 776.0 200.8 772.7 206.6 769.0C212.4 765.3 219.3 761.2 224.0 758.0C228.7 754.8 231.5 752.3 235.0 750.0C238.5 747.7 243.3 745.0 245.0 744.0" fill="none" stroke="#86ccfc" stroke-width="1.2" stroke-linecap="round"/>
<path d="M667.0 594.0C672.3 600.7 688.3 622.0 699.0 634.0C709.7 646.0 721.7 656.1 731.0 665.8C740.3 675.5 747.4 683.5 754.6 692.0C761.8 700.5 768.8 708.2 774.0 717.0C779.2 725.8 782.7 737.1 786.0 745.0C789.3 752.9 791.3 753.4 794.0 764.6C796.7 775.8 800.7 804.1 802.0 812.0" fill="none" stroke="#1e84f6" stroke-width="4.5" opacity=".7" filter="url(#glow)"/>
<path d="M667.0 594.0C672.3 600.7 688.3 622.0 699.0 634.0C709.7 646.0 721.7 656.1 731.0 665.8C740.3 675.5 747.4 683.5 754.6 692.0C761.8 700.5 768.8 708.2 774.0 717.0C779.2 725.8 782.7 737.1 786.0 745.0C789.3 752.9 791.3 753.4 794.0 764.6C796.7 775.8 800.7 804.1 802.0 812.0" fill="none" stroke="#86ccfc" stroke-width="1.2" stroke-linecap="round"/>
<path d="M770.0 470.0C772.3 475.0 777.3 485.8 784.0 500.0C790.7 514.2 801.1 536.0 810.0 555.0C818.9 574.0 828.4 592.2 837.6 614.0C846.8 635.8 857.1 664.3 865.0 685.5C872.9 706.7 879.0 719.9 885.0 741.0C891.0 762.1 898.3 800.2 901.0 812.0" fill="none" stroke="#1e84f6" stroke-width="4.5" opacity=".7" filter="url(#glow)"/>
<path d="M770.0 470.0C772.3 475.0 777.3 485.8 784.0 500.0C790.7 514.2 801.1 536.0 810.0 555.0C818.9 574.0 828.4 592.2 837.6 614.0C846.8 635.8 857.1 664.3 865.0 685.5C872.9 706.7 879.0 719.9 885.0 741.0C891.0 762.1 898.3 800.2 901.0 812.0" fill="none" stroke="#86ccfc" stroke-width="1.2" stroke-linecap="round"/>
<path d="M667.7 733.0C672.2 735.7 683.1 743.1 695.0 749.0C706.9 754.9 722.5 761.7 739.0 768.5C755.5 775.3 784.8 786.4 794.0 790.0" fill="none" stroke="#1e84f6" stroke-width="4.5" opacity=".7" filter="url(#glow)"/>
<path d="M667.7 733.0C672.2 735.7 683.1 743.1 695.0 749.0C706.9 754.9 722.5 761.7 739.0 768.5C755.5 775.3 784.8 786.4 794.0 790.0" fill="none" stroke="#86ccfc" stroke-width="1.2" stroke-linecap="round"/>
<linearGradient id="l2g" gradientUnits="userSpaceOnUse" x1="0" y1="505" x2="0" y2="590"><stop offset="0" stop-color="#62b4f6"/><stop offset=".6" stop-color="#4a98e8" stop-opacity=".8"/><stop offset="1" stop-color="#3a80d8" stop-opacity="0"/></linearGradient>
<path d="M145.0 588.0C145.4 585.1 146.9 575.8 147.7 570.7C148.5 565.6 148.5 563.1 150.0 557.6C151.5 552.1 153.7 543.4 156.5 538.0C159.3 532.6 163.2 529.3 167.0 525.0C170.8 520.7 176.4 515.0 179.6 512.0C182.8 509.0 184.9 507.8 186.0 507.0" fill="none" stroke="url(#l2g)" stroke-width="1.100"/>
<path d="M672.0 520.0C675.0 522.5 685.3 529.7 690.0 535.0C694.7 540.3 697.0 546.2 700.0 552.0C703.0 557.8 706.0 563.7 708.0 570.0C710.0 576.3 711.3 586.7 712.0 590.0" fill="none" stroke="#2a90ff" stroke-width="3.5" opacity=".7" filter="url(#glow)"/>
<path d="M672.0 520.0C675.0 522.5 685.3 529.7 690.0 535.0C694.7 540.3 697.0 546.2 700.0 552.0C703.0 557.8 706.0 563.7 708.0 570.0C710.0 576.3 711.3 586.7 712.0 590.0" fill="none" stroke="#7fd0ff" stroke-width="1.2" stroke-linecap="round"/>
<path d="M682.0 520.0C685.0 520.3 693.7 520.3 700.0 522.0C706.3 523.7 713.7 527.0 720.0 530.0C726.3 533.0 735.0 538.3 738.0 540.0" fill="none" stroke="#2a90ff" stroke-width="3.5" opacity=".7" filter="url(#glow)"/>
<path d="M682.0 520.0C685.0 520.3 693.7 520.3 700.0 522.0C706.3 523.7 713.7 527.0 720.0 530.0C726.3 533.0 735.0 538.3 738.0 540.0" fill="none" stroke="#7fd0ff" stroke-width="1.2" stroke-linecap="round"/>
<path d="M699.0 519.5C701.7 522.8 709.7 529.1 715.0 539.0C720.3 548.9 726.2 567.2 731.0 579.0C735.8 590.8 740.9 598.8 743.5 610.0C746.1 621.2 744.9 632.8 746.7 646.0C748.6 659.2 753.3 682.2 754.6 689.5" fill="none" stroke="#2a90ff" stroke-width="3.5" opacity=".7" filter="url(#glow)"/>
<path d="M699.0 519.5C701.7 522.8 709.7 529.1 715.0 539.0C720.3 548.9 726.2 567.2 731.0 579.0C735.8 590.8 740.9 598.8 743.5 610.0C746.1 621.2 744.9 632.8 746.7 646.0C748.6 659.2 753.3 682.2 754.6 689.5" fill="none" stroke="#7fd0ff" stroke-width="1.2" stroke-linecap="round"/>
<path d="M667 590L688 522" stroke="#5ab8ff" stroke-width="1.200" fill="none"/>
<g clip-path="url(#gr)">
<rect x="179" y="157" width="488" height="592" fill="#c1c1c1"/>
<rect x="179" y="157" width="488" height="592" filter="url(#emb)" opacity=".24"/>
<rect x="184" y="296" width="37" height="312" fill="url(#erow)" opacity="0.95"/>
<rect x="221" y="286" width="37" height="322" fill="url(#erow)" opacity="0.95"/>
<rect x="258" y="226" width="37" height="104" fill="url(#erow)" opacity="0.40"/>
<rect x="258" y="330" width="37" height="276" fill="url(#erow)" opacity="0.90"/>
<rect x="296" y="196" width="37" height="134" fill="url(#erow)" opacity="0.35"/>
<rect x="296" y="330" width="37" height="150" fill="url(#erow)" opacity="0.60"/>
<rect x="333" y="176" width="37" height="124" fill="url(#erow)" opacity="0.35"/>
<rect x="371" y="165" width="37" height="65" fill="url(#erow)" opacity="0.30"/>
<rect x="408" y="165" width="37" height="55" fill="url(#erow)" opacity="0.25"/>
<rect x="446" y="165" width="37" height="50" fill="url(#erow)" opacity="0.25"/>
<rect x="483" y="165" width="37" height="60" fill="url(#erow)" opacity="0.25"/>
<rect x="521" y="175" width="37" height="85" fill="url(#erow)" opacity="0.30"/>
<rect x="558" y="300" width="37" height="220" fill="url(#erow)" opacity="0.55"/>
<rect x="596" y="316" width="37" height="339" fill="url(#erow)" opacity="0.95"/>
<rect x="633" y="326" width="37" height="329" fill="url(#erow)" opacity="0.95"/>
<rect x="300" y="470" width="290" height="200" fill="url(#frow)" opacity=".5"/>
<rect x="179" y="157" width="488" height="592" fill="url(#vcol)" opacity=".3"/>
<g mask="url(#headm)"><rect x="290" y="180" width="330" height="290" filter="url(#emb2)" opacity=".26"/></g>
<path d="M424 323C434 342 436 363 438 383M537 320C542 331 531 336 529 346M474 326C491 341 496 359 512 378M484 257C498 260 497 278 504 283M490 365C511 383 502 405 496 426M405 230C411 244 421 255 429 268M487 193C468 210 489 232 476 253M512 294C493 298 484 319 472 328M579 304C572 333 542 348 530 375M341 258C352 294 391 275 413 300M536 315C558 334 557 367 570 390M525 315C540 316 544 335 550 339M487 344C492 351 496 360 502 368M520 204C511 215 498 220 487 230M505 287C500 299 494 311 489 323M551 300C538 310 530 324 517 336M326 271C329 305 371 312 376 343M383 347C385 357 391 365 397 374M464 347C470 354 466 361 465 369M596 310C593 337 567 341 550 357M444 324C432 338 419 351 405 364M376 359C405 343 431 383 458 368M396 280C384 306 425 314 417 337M446 367C440 378 449 389 448 401M441 323C413 341 431 378 408 400M442 390C462 380 475 398 488 404M467 372C426 384 464 426 424 452M461 349C470 360 460 374 464 385M496 236C495 246 503 253 503 263M440 224C443 238 456 238 464 250M510 272C538 283 541 311 550 335M564 251C552 248 547 262 534 263M385 339C383 371 402 397 407 430M319 325C347 340 348 371 361 396M458 388C449 398 458 409 458 420M343 234C328 252 348 268 345 286M433 304C432 312 438 317 441 324M438 209C437 224 437 239 436 254M543 333C532 357 523 381 512 405M547 253C532 268 516 284 500 300M326 344C352 361 373 342 399 338M314 237C346 252 345 288 352 312M538 317C504 314 492 357 474 363M436 239C403 262 420 301 419 324M390 349C385 359 377 368 372 378M478 338C501 364 466 387 473 413M523 310C514 319 530 327 524 337M500 339C497 347 503 355 504 363M335 354C330 367 347 371 348 384M467 294C476 316 479 341 483 364M380 226C370 231 374 242 369 250M330 258C342 271 330 285 335 300M500 324C498 340 482 350 478 363M397 293C415 305 404 322 405 339M449 187C469 220 422 245 435 276M330 294C331 311 334 327 335 345M373 383C387 395 393 411 400 427M550 339C561 351 558 367 556 379M531 227C528 241 523 254 518 268M455 387C443 415 436 446 427 475M434 352C428 369 422 387 415 405M520 304C519 314 515 322 511 331M410 335C418 360 443 372 455 397M371 318C407 331 395 375 424 395M602 330C572 325 554 354 533 360M297 294C312 323 347 306 368 332M404 212C410 222 410 233 411 243M344 252C344 276 363 295 369 315M470 188C499 200 478 229 500 252M519 306C527 334 496 349 498 378M338 303C360 319 387 326 410 334M500 324C503 351 482 374 478 397M510 302C521 325 509 349 513 373M378 296C412 300 412 345 446 351M561 310C550 327 531 322 514 339M462 393C471 399 481 404 490 409M505 229C488 230 488 243 477 256M540 290C549 308 544 327 542 345M426 379C430 414 380 418 381 449M514 258C512 274 501 288 499 305M395 359C391 370 400 375 403 387M457 344C467 365 450 380 448 402M527 203C533 232 546 260 553 289M413 215C428 238 452 251 472 265M485 278C481 294 499 306 496 320M410 234C417 254 416 275 418 296M477 381C452 415 493 439 493 467M466 322C478 338 466 353 463 369M326 248C334 262 345 276 355 291M503 293C533 318 509 355 521 384M493 252C492 269 486 285 485 303M468 295C462 300 464 310 458 317M419 290C427 323 474 326 483 341M512 324C492 330 485 352 465 361M373 228C377 236 386 233 394 242M409 252C415 262 408 273 411 283M463 312C479 321 476 338 488 355M413 344C412 376 436 403 436 434M474 355C474 376 450 370 442 386M381 312C373 342 399 357 414 374M395 341C392 370 417 391 423 416M523 263C536 291 522 317 518 345M407 410C415 420 418 433 426 443M505 354C489 363 495 377 495 390M561 329C528 313 522 346 490 355M489 385C521 400 495 433 515 456M396 341C404 354 399 368 407 382M514 282C498 294 511 313 499 328M529 323C537 333 535 345 541 357M363 334C380 366 360 387 342 409M513 267C516 283 498 295 501 312M423 404C440 404 452 421 464 424M551 254C545 265 537 275 530 286M398 326C403 343 408 360 413 378M506 194C501 216 483 230 470 249M446 274C450 287 462 293 471 301M539 291C514 324 544 349 552 377M563 364C538 365 514 361 489 359M360 219C387 232 366 261 389 283M345 279C373 269 394 289 419 297M522 381C505 398 527 415 523 432M489 182C516 212 484 244 490 276M530 210C528 222 512 223 509 232M541 249C531 275 516 298 502 325M481 287C489 297 491 310 495 322M435 373C457 388 460 415 463 437M419 235C423 261 431 287 439 313M374 334C395 355 383 380 380 402M381 331C390 343 401 353 411 364M563 228C546 238 531 229 514 226M572 295C562 314 581 329 581 346M574 303C544 301 534 337 519 345M387 345C371 366 384 384 392 405M505 191C507 207 485 207 486 222M439 277C423 302 427 331 413 361M461 240C451 259 475 274 469 291M462 372C471 379 467 392 474 400M561 303C573 337 523 353 529 373M358 246C367 261 381 272 392 286M365 332C369 339 376 344 381 349M455 186C474 200 469 223 469 241M536 330C544 356 511 369 510 384M433 185C443 203 438 223 447 242M549 189C524 205 526 242 519 258M307 286C296 319 320 333 339 358M448 230C465 256 446 286 460 316M310 289C327 302 334 322 342 339M543 386C513 390 508 430 495 439M524 328C519 356 522 385 519 414M563 354C563 377 551 399 550 421M549 284C561 301 542 319 550 338M503 242C470 241 477 282 454 290M459 287C457 309 447 329 442 352M501 321C517 349 500 365 482 388M524 328C528 353 501 366 498 387M554 392C547 407 532 400 519 410M533 230C530 237 532 245 530 253M398 211C385 241 399 270 403 301M544 326C537 334 539 343 540 352M502 285C494 295 492 307 487 318M471 262C464 270 477 278 472 287M605 300C584 315 561 326 540 340M459 327C450 342 462 358 457 373M439 230C440 250 434 271 435 292M454 367C474 402 441 422 430 449M443 164C455 188 441 214 451 240M444 396C434 428 470 429 477 459M394 194C400 213 421 220 432 233M491 397C486 411 473 398 462 412M431 338C435 348 421 352 422 361M425 200C409 210 420 232 406 244M597 331C557 329 547 365 530 389M487 300C462 310 467 336 448 356M460 303C488 315 489 347 503 367M518 299C521 316 507 331 510 347M523 238C517 243 509 244 501 249M364 363C400 369 384 403 416 429M515 278C484 298 492 330 499 354M327 300C322 318 337 325 344 344M457 333C446 354 435 376 423 398M561 333C563 357 550 377 545 399M451 263C491 267 492 305 506 330M518 251C524 262 527 275 532 287M470 205C464 221 450 226 438 241M391 192C388 218 392 243 395 270M509 267C505 279 491 282 485 294M483 321C494 343 477 361 474 381M574 293C561 290 556 304 549 308M577 290C568 298 564 310 558 321M422 307C423 327 446 333 451 349M397 233C386 249 400 267 391 284M351 245C361 262 345 279 351 297M486 191C476 211 463 229 451 250M509 320C504 348 527 371 529 397M351 326C352 358 381 352 401 377M458 219C445 243 460 254 474 275M525 394C516 399 510 407 502 413M321 279C339 300 358 318 378 339M471 395C467 409 481 415 486 422M445 376C443 384 438 389 435 397M411 316C411 346 415 376 417 407M417 334C406 340 409 353 400 361M351 310C351 326 363 339 365 355M411 309C404 335 371 334 361 347M488 243C501 260 496 279 492 296M445 348C442 362 439 376 436 391M419 249C409 252 413 265 403 269M527 364C551 386 539 410 529 432M419 251C410 263 418 276 417 290M558 244C544 247 547 265 537 271M389 201C386 214 393 225 393 237M307 356C328 347 348 355 369 359M413 291C420 308 428 326 436 344M590 299C576 312 567 329 554 342M390 334C386 357 392 378 398 402M393 191C383 210 406 218 407 234M467 282C456 298 469 312 470 328M321 294C333 296 345 302 357 305M495 236C496 257 477 268 472 290M370 214C385 221 392 237 403 246M391 198C378 224 369 252 360 279M525 278C506 301 501 333 484 357M534 231C531 256 540 279 540 304M384 220C417 225 421 253 434 279M464 165C453 194 479 218 478 245M414 366C424 378 428 393 437 405M570 315C549 332 537 355 516 376M545 293C517 303 543 333 515 351M414 318C428 324 427 341 426 349M549 382C539 390 542 400 542 410" fill="none" stroke="#fcfcfc" stroke-width="2" transform="translate(1.5 1.2)" opacity=".8"/>
<path d="M424 323C434 342 436 363 438 383M537 320C542 331 531 336 529 346M474 326C491 341 496 359 512 378M484 257C498 260 497 278 504 283M490 365C511 383 502 405 496 426M405 230C411 244 421 255 429 268M487 193C468 210 489 232 476 253M512 294C493 298 484 319 472 328M579 304C572 333 542 348 530 375M341 258C352 294 391 275 413 300M536 315C558 334 557 367 570 390M525 315C540 316 544 335 550 339M487 344C492 351 496 360 502 368M520 204C511 215 498 220 487 230M505 287C500 299 494 311 489 323M551 300C538 310 530 324 517 336M326 271C329 305 371 312 376 343M383 347C385 357 391 365 397 374M464 347C470 354 466 361 465 369M596 310C593 337 567 341 550 357M444 324C432 338 419 351 405 364M376 359C405 343 431 383 458 368M396 280C384 306 425 314 417 337M446 367C440 378 449 389 448 401M441 323C413 341 431 378 408 400M442 390C462 380 475 398 488 404M467 372C426 384 464 426 424 452M461 349C470 360 460 374 464 385M496 236C495 246 503 253 503 263M440 224C443 238 456 238 464 250M510 272C538 283 541 311 550 335M564 251C552 248 547 262 534 263M385 339C383 371 402 397 407 430M319 325C347 340 348 371 361 396M458 388C449 398 458 409 458 420M343 234C328 252 348 268 345 286M433 304C432 312 438 317 441 324M438 209C437 224 437 239 436 254M543 333C532 357 523 381 512 405M547 253C532 268 516 284 500 300M326 344C352 361 373 342 399 338M314 237C346 252 345 288 352 312M538 317C504 314 492 357 474 363M436 239C403 262 420 301 419 324M390 349C385 359 377 368 372 378M478 338C501 364 466 387 473 413M523 310C514 319 530 327 524 337M500 339C497 347 503 355 504 363M335 354C330 367 347 371 348 384M467 294C476 316 479 341 483 364M380 226C370 231 374 242 369 250M330 258C342 271 330 285 335 300M500 324C498 340 482 350 478 363M397 293C415 305 404 322 405 339M449 187C469 220 422 245 435 276M330 294C331 311 334 327 335 345M373 383C387 395 393 411 400 427M550 339C561 351 558 367 556 379M531 227C528 241 523 254 518 268M455 387C443 415 436 446 427 475M434 352C428 369 422 387 415 405M520 304C519 314 515 322 511 331M410 335C418 360 443 372 455 397M371 318C407 331 395 375 424 395M602 330C572 325 554 354 533 360M297 294C312 323 347 306 368 332M404 212C410 222 410 233 411 243M344 252C344 276 363 295 369 315M470 188C499 200 478 229 500 252M519 306C527 334 496 349 498 378M338 303C360 319 387 326 410 334M500 324C503 351 482 374 478 397M510 302C521 325 509 349 513 373M378 296C412 300 412 345 446 351M561 310C550 327 531 322 514 339M462 393C471 399 481 404 490 409M505 229C488 230 488 243 477 256M540 290C549 308 544 327 542 345M426 379C430 414 380 418 381 449M514 258C512 274 501 288 499 305M395 359C391 370 400 375 403 387M457 344C467 365 450 380 448 402M527 203C533 232 546 260 553 289M413 215C428 238 452 251 472 265M485 278C481 294 499 306 496 320M410 234C417 254 416 275 418 296M477 381C452 415 493 439 493 467M466 322C478 338 466 353 463 369M326 248C334 262 345 276 355 291M503 293C533 318 509 355 521 384M493 252C492 269 486 285 485 303M468 295C462 300 464 310 458 317M419 290C427 323 474 326 483 341M512 324C492 330 485 352 465 361M373 228C377 236 386 233 394 242M409 252C415 262 408 273 411 283M463 312C479 321 476 338 488 355M413 344C412 376 436 403 436 434M474 355C474 376 450 370 442 386M381 312C373 342 399 357 414 374M395 341C392 370 417 391 423 416M523 263C536 291 522 317 518 345M407 410C415 420 418 433 426 443M505 354C489 363 495 377 495 390M561 329C528 313 522 346 490 355M489 385C521 400 495 433 515 456M396 341C404 354 399 368 407 382M514 282C498 294 511 313 499 328M529 323C537 333 535 345 541 357M363 334C380 366 360 387 342 409M513 267C516 283 498 295 501 312M423 404C440 404 452 421 464 424M551 254C545 265 537 275 530 286M398 326C403 343 408 360 413 378M506 194C501 216 483 230 470 249" fill="none" stroke="#141414" stroke-width="1.500" opacity=".9"/>
<path d="M446 274C450 287 462 293 471 301M539 291C514 324 544 349 552 377M563 364C538 365 514 361 489 359M360 219C387 232 366 261 389 283M345 279C373 269 394 289 419 297M522 381C505 398 527 415 523 432M489 182C516 212 484 244 490 276M530 210C528 222 512 223 509 232M541 249C531 275 516 298 502 325M481 287C489 297 491 310 495 322M435 373C457 388 460 415 463 437M419 235C423 261 431 287 439 313M374 334C395 355 383 380 380 402M381 331C390 343 401 353 411 364M563 228C546 238 531 229 514 226M572 295C562 314 581 329 581 346M574 303C544 301 534 337 519 345M387 345C371 366 384 384 392 405M505 191C507 207 485 207 486 222M439 277C423 302 427 331 413 361M461 240C451 259 475 274 469 291M462 372C471 379 467 392 474 400M561 303C573 337 523 353 529 373M358 246C367 261 381 272 392 286M365 332C369 339 376 344 381 349M455 186C474 200 469 223 469 241M536 330C544 356 511 369 510 384M433 185C443 203 438 223 447 242M549 189C524 205 526 242 519 258M307 286C296 319 320 333 339 358M448 230C465 256 446 286 460 316M310 289C327 302 334 322 342 339M543 386C513 390 508 430 495 439M524 328C519 356 522 385 519 414M563 354C563 377 551 399 550 421M549 284C561 301 542 319 550 338M503 242C470 241 477 282 454 290M459 287C457 309 447 329 442 352M501 321C517 349 500 365 482 388M524 328C528 353 501 366 498 387M554 392C547 407 532 400 519 410M533 230C530 237 532 245 530 253M398 211C385 241 399 270 403 301M544 326C537 334 539 343 540 352M502 285C494 295 492 307 487 318M471 262C464 270 477 278 472 287M605 300C584 315 561 326 540 340M459 327C450 342 462 358 457 373M439 230C440 250 434 271 435 292M454 367C474 402 441 422 430 449M443 164C455 188 441 214 451 240M444 396C434 428 470 429 477 459M394 194C400 213 421 220 432 233M491 397C486 411 473 398 462 412M431 338C435 348 421 352 422 361M425 200C409 210 420 232 406 244M597 331C557 329 547 365 530 389M487 300C462 310 467 336 448 356M460 303C488 315 489 347 503 367M518 299C521 316 507 331 510 347M523 238C517 243 509 244 501 249M364 363C400 369 384 403 416 429M515 278C484 298 492 330 499 354M327 300C322 318 337 325 344 344M457 333C446 354 435 376 423 398M561 333C563 357 550 377 545 399M451 263C491 267 492 305 506 330M518 251C524 262 527 275 532 287M470 205C464 221 450 226 438 241M391 192C388 218 392 243 395 270M509 267C505 279 491 282 485 294M483 321C494 343 477 361 474 381M574 293C561 290 556 304 549 308M577 290C568 298 564 310 558 321M422 307C423 327 446 333 451 349M397 233C386 249 400 267 391 284M351 245C361 262 345 279 351 297M486 191C476 211 463 229 451 250M509 320C504 348 527 371 529 397M351 326C352 358 381 352 401 377M458 219C445 243 460 254 474 275M525 394C516 399 510 407 502 413M321 279C339 300 358 318 378 339M471 395C467 409 481 415 486 422M445 376C443 384 438 389 435 397M411 316C411 346 415 376 417 407M417 334C406 340 409 353 400 361M351 310C351 326 363 339 365 355M411 309C404 335 371 334 361 347M488 243C501 260 496 279 492 296M445 348C442 362 439 376 436 391M419 249C409 252 413 265 403 269M527 364C551 386 539 410 529 432M419 251C410 263 418 276 417 290M558 244C544 247 547 265 537 271M389 201C386 214 393 225 393 237M307 356C328 347 348 355 369 359M413 291C420 308 428 326 436 344M590 299C576 312 567 329 554 342M390 334C386 357 392 378 398 402M393 191C383 210 406 218 407 234M467 282C456 298 469 312 470 328M321 294C333 296 345 302 357 305M495 236C496 257 477 268 472 290M370 214C385 221 392 237 403 246M391 198C378 224 369 252 360 279M525 278C506 301 501 333 484 357M534 231C531 256 540 279 540 304M384 220C417 225 421 253 434 279M464 165C453 194 479 218 478 245M414 366C424 378 428 393 437 405M570 315C549 332 537 355 516 376M545 293C517 303 543 333 515 351M414 318C428 324 427 341 426 349M549 382C539 390 542 400 542 410" fill="none" stroke="#2a2a2a" stroke-width=".9" opacity=".85"/>
<path d="M262.0 345.0C263.0 337.5 264.2 314.5 268.0 300.0C271.8 285.5 277.7 271.0 285.0 258.0C292.3 245.0 301.2 232.3 312.0 222.0C322.8 211.7 336.2 202.8 350.0 196.0C363.8 189.2 380.0 184.2 395.0 181.0C410.0 177.8 424.7 176.7 440.0 177.0C455.3 177.3 472.8 179.2 487.0 183.0C501.2 186.8 513.5 192.5 525.0 200.0C536.5 207.5 547.2 217.7 556.0 228.0C564.8 238.3 572.3 250.0 578.0 262.0C583.7 274.0 587.0 286.2 590.0 300.0C593.0 313.8 594.8 331.7 596.0 345.0C597.2 358.3 596.8 374.2 597.0 380.0" fill="none" stroke="#f6f6f6" stroke-width="1.6" transform="translate(1.3 1.3)" opacity=".8"/>
<path d="M262.0 345.0C263.0 337.5 264.2 314.5 268.0 300.0C271.8 285.5 277.7 271.0 285.0 258.0C292.3 245.0 301.2 232.3 312.0 222.0C322.8 211.7 336.2 202.8 350.0 196.0C363.8 189.2 380.0 184.2 395.0 181.0C410.0 177.8 424.7 176.7 440.0 177.0C455.3 177.3 472.8 179.2 487.0 183.0C501.2 186.8 513.5 192.5 525.0 200.0C536.5 207.5 547.2 217.7 556.0 228.0C564.8 238.3 572.3 250.0 578.0 262.0C583.7 274.0 587.0 286.2 590.0 300.0C593.0 313.8 594.8 331.7 596.0 345.0C597.2 358.3 596.8 374.2 597.0 380.0" fill="none" stroke="#2a2a2a" stroke-width="1.2" opacity="0.85"/>
<path d="M262.0 345.0C263.0 337.5 264.2 314.5 268.0 300.0C271.8 285.5 277.7 271.0 285.0 258.0C292.3 245.0 301.2 232.3 312.0 222.0C322.8 211.7 337.8 202.3 350.0 196.0C362.2 189.7 379.2 186.0 385.0 184.0" fill="none" stroke="#f6f6f6" stroke-width="2.8" transform="translate(1.3 1.3)" opacity=".8"/>
<path d="M262.0 345.0C263.0 337.5 264.2 314.5 268.0 300.0C271.8 285.5 277.7 271.0 285.0 258.0C292.3 245.0 301.2 232.3 312.0 222.0C322.8 211.7 337.8 202.3 350.0 196.0C362.2 189.7 379.2 186.0 385.0 184.0" fill="none" stroke="#121212" stroke-width="2.4" opacity="1.00"/>
<path d="M283.0 350.0C284.2 341.7 285.5 315.8 290.0 300.0C294.5 284.2 301.7 268.0 310.0 255.0C318.3 242.0 328.3 231.2 340.0 222.0C351.7 212.8 365.0 205.3 380.0 200.0C395.0 194.7 413.3 190.8 430.0 190.0C446.7 189.2 465.0 191.3 480.0 195.0C495.0 198.7 508.3 204.5 520.0 212.0C531.7 219.5 541.7 228.7 550.0 240.0C558.3 251.3 565.0 265.0 570.0 280.0C575.0 295.0 578.3 321.7 580.0 330.0" fill="none" stroke="#f6f6f6" stroke-width="1.4" transform="translate(1.3 1.3)" opacity=".8"/>
<path d="M283.0 350.0C284.2 341.7 285.5 315.8 290.0 300.0C294.5 284.2 301.7 268.0 310.0 255.0C318.3 242.0 328.3 231.2 340.0 222.0C351.7 212.8 365.0 205.3 380.0 200.0C395.0 194.7 413.3 190.8 430.0 190.0C446.7 189.2 465.0 191.3 480.0 195.0C495.0 198.7 508.3 204.5 520.0 212.0C531.7 219.5 541.7 228.7 550.0 240.0C558.3 251.3 565.0 265.0 570.0 280.0C575.0 295.0 578.3 321.7 580.0 330.0" fill="none" stroke="#3a3a3a" stroke-width="1.0" opacity="0.70"/>
<path d="M310.0 440.0C313.3 444.7 320.8 461.7 330.0 468.0C339.2 474.3 353.3 477.7 365.0 478.0C376.7 478.3 387.5 470.3 400.0 470.0C412.5 469.7 426.7 476.3 440.0 476.0C453.3 475.7 466.7 469.0 480.0 468.0C493.3 467.0 506.7 472.2 520.0 470.0C533.3 467.8 548.3 460.0 560.0 455.0C571.7 450.0 585.0 442.5 590.0 440.0" fill="none" stroke="#f6f6f6" stroke-width="1.4" transform="translate(1.3 1.3)" opacity=".8"/>
<path d="M310.0 440.0C313.3 444.7 320.8 461.7 330.0 468.0C339.2 474.3 353.3 477.7 365.0 478.0C376.7 478.3 387.5 470.3 400.0 470.0C412.5 469.7 426.7 476.3 440.0 476.0C453.3 475.7 466.7 469.0 480.0 468.0C493.3 467.0 506.7 472.2 520.0 470.0C533.3 467.8 548.3 460.0 560.0 455.0C571.7 450.0 585.0 442.5 590.0 440.0" fill="none" stroke="#3a3a3a" stroke-width="1.0" opacity="0.70"/>
<path d="M179.0 474.0C181.8 467.0 190.1 445.7 196.0 432.0C201.9 418.3 208.5 402.0 214.5 392.0C220.5 382.0 225.8 378.3 232.0 372.0C238.2 365.7 245.7 359.9 251.7 354.4C257.7 348.9 262.6 343.9 268.0 339.0C273.4 334.1 280.2 327.8 284.0 325.0C287.8 322.2 288.8 321.8 291.0 322.0C293.2 322.2 295.2 323.7 297.0 326.0C298.8 328.3 301.4 332.0 302.0 336.0C302.6 340.0 302.6 345.5 300.6 350.0C298.6 354.5 294.3 358.4 290.0 363.0C285.7 367.6 281.4 371.9 275.0 377.7C268.6 383.5 260.6 389.1 251.7 398.0C242.8 406.9 230.1 421.0 221.5 431.0C212.9 441.0 207.1 448.8 200.0 458.0C192.9 467.2 182.5 481.3 179.0 486.0z" fill="#a6a6a6" opacity="0.50"/>
<path d="M179.0 474.0C181.8 467.0 190.1 445.7 196.0 432.0C201.9 418.3 208.5 402.0 214.5 392.0C220.5 382.0 225.8 378.3 232.0 372.0C238.2 365.7 245.7 359.9 251.7 354.4C257.7 348.9 262.6 343.9 268.0 339.0C273.4 334.1 280.2 327.8 284.0 325.0C287.8 322.2 288.8 321.8 291.0 322.0C293.2 322.2 295.2 323.7 297.0 326.0C298.8 328.3 301.4 332.0 302.0 336.0C302.6 340.0 302.6 345.5 300.6 350.0C298.6 354.5 294.3 358.4 290.0 363.0C285.7 367.6 281.4 371.9 275.0 377.7C268.6 383.5 260.6 389.1 251.7 398.0C242.8 406.9 230.1 421.0 221.5 431.0C212.9 441.0 207.1 448.8 200.0 458.0C192.9 467.2 182.5 481.3 179.0 486.0z" fill="none" stroke="#f6f6f6" stroke-width="1.9" transform="translate(1.3 1.3)" opacity=".8"/>
<path d="M179.0 474.0C181.8 467.0 190.1 445.7 196.0 432.0C201.9 418.3 208.5 402.0 214.5 392.0C220.5 382.0 225.8 378.3 232.0 372.0C238.2 365.7 245.7 359.9 251.7 354.4C257.7 348.9 262.6 343.9 268.0 339.0C273.4 334.1 280.2 327.8 284.0 325.0C287.8 322.2 288.8 321.8 291.0 322.0C293.2 322.2 295.2 323.7 297.0 326.0C298.8 328.3 301.4 332.0 302.0 336.0C302.6 340.0 302.6 345.5 300.6 350.0C298.6 354.5 294.3 358.4 290.0 363.0C285.7 367.6 281.4 371.9 275.0 377.7C268.6 383.5 260.6 389.1 251.7 398.0C242.8 406.9 230.1 421.0 221.5 431.0C212.9 441.0 207.1 448.8 200.0 458.0C192.9 467.2 182.5 481.3 179.0 486.0z" fill="none" stroke="#1a1a1a" stroke-width="1.5" opacity="1.00"/>
<path d="M290.0 363.0C291.3 362.0 295.5 358.2 298.0 357.0C300.5 355.8 302.7 355.2 305.0 356.0C307.3 356.8 310.4 358.4 312.0 362.0C313.6 365.6 314.7 373.0 314.5 377.7C314.3 382.4 312.6 386.1 311.0 390.0C309.4 393.9 308.5 396.5 305.0 401.0C301.5 405.5 295.0 412.0 290.0 417.0C285.0 422.0 281.0 424.4 275.0 431.0C269.0 437.6 261.8 448.5 254.0 456.7C246.2 464.9 236.7 472.8 228.5 480.0C220.3 487.2 213.2 493.3 205.0 500.0C196.8 506.7 183.3 521.7 179.0 520.0C174.7 518.3 175.5 500.0 179.0 490.0C182.5 480.0 192.9 469.5 200.0 460.0C207.1 450.5 212.9 443.0 221.5 433.0C230.1 423.0 242.8 409.0 251.7 400.0C260.6 391.0 271.1 382.5 275.0 379.0z" fill="#ababab" opacity="0.45"/>
<path d="M290.0 363.0C291.3 362.0 295.5 358.2 298.0 357.0C300.5 355.8 302.7 355.2 305.0 356.0C307.3 356.8 310.4 358.4 312.0 362.0C313.6 365.6 314.7 373.0 314.5 377.7C314.3 382.4 312.6 386.1 311.0 390.0C309.4 393.9 308.5 396.5 305.0 401.0C301.5 405.5 295.0 412.0 290.0 417.0C285.0 422.0 281.0 424.4 275.0 431.0C269.0 437.6 261.8 448.5 254.0 456.7C246.2 464.9 236.7 472.8 228.5 480.0C220.3 487.2 213.2 493.3 205.0 500.0C196.8 506.7 183.3 521.7 179.0 520.0C174.7 518.3 175.5 500.0 179.0 490.0C182.5 480.0 192.9 469.5 200.0 460.0C207.1 450.5 212.9 443.0 221.5 433.0C230.1 423.0 242.8 409.0 251.7 400.0C260.6 391.0 271.1 382.5 275.0 379.0z" fill="none" stroke="#f6f6f6" stroke-width="1.7" transform="translate(1.3 1.3)" opacity=".8"/>
<path d="M290.0 363.0C291.3 362.0 295.5 358.2 298.0 357.0C300.5 355.8 302.7 355.2 305.0 356.0C307.3 356.8 310.4 358.4 312.0 362.0C313.6 365.6 314.7 373.0 314.5 377.7C314.3 382.4 312.6 386.1 311.0 390.0C309.4 393.9 308.5 396.5 305.0 401.0C301.5 405.5 295.0 412.0 290.0 417.0C285.0 422.0 281.0 424.4 275.0 431.0C269.0 437.6 261.8 448.5 254.0 456.7C246.2 464.9 236.7 472.8 228.5 480.0C220.3 487.2 213.2 493.3 205.0 500.0C196.8 506.7 183.3 521.7 179.0 520.0C174.7 518.3 175.5 500.0 179.0 490.0C182.5 480.0 192.9 469.5 200.0 460.0C207.1 450.5 212.9 443.0 221.5 433.0C230.1 423.0 242.8 409.0 251.7 400.0C260.6 391.0 271.1 382.5 275.0 379.0z" fill="none" stroke="#1a1a1a" stroke-width="1.3" opacity="1.00"/>
<path d="M215.0 486.0C217.2 484.3 220.4 481.1 228.5 476.0C236.6 470.9 254.8 460.2 263.4 455.4C272.0 450.6 275.4 449.1 280.0 447.0C284.6 444.9 287.8 442.3 291.0 442.8C294.2 443.3 298.2 447.1 299.4 449.8C300.6 452.5 298.6 456.3 298.0 459.0C297.4 461.7 298.3 462.5 296.0 466.0C293.7 469.5 289.7 475.3 284.0 480.0C278.3 484.7 269.3 489.8 262.0 494.0C254.7 498.2 247.0 501.5 240.0 505.0C233.0 508.5 223.3 513.3 220.0 515.0z" fill="#a4a4a4" opacity="0.45"/>
<path d="M215.0 486.0C217.2 484.3 220.4 481.1 228.5 476.0C236.6 470.9 254.8 460.2 263.4 455.4C272.0 450.6 275.4 449.1 280.0 447.0C284.6 444.9 287.8 442.3 291.0 442.8C294.2 443.3 298.2 447.1 299.4 449.8C300.6 452.5 298.6 456.3 298.0 459.0C297.4 461.7 298.3 462.5 296.0 466.0C293.7 469.5 289.7 475.3 284.0 480.0C278.3 484.7 269.3 489.8 262.0 494.0C254.7 498.2 247.0 501.5 240.0 505.0C233.0 508.5 223.3 513.3 220.0 515.0z" fill="none" stroke="#f6f6f6" stroke-width="1.6" transform="translate(1.3 1.3)" opacity=".8"/>
<path d="M215.0 486.0C217.2 484.3 220.4 481.1 228.5 476.0C236.6 470.9 254.8 460.2 263.4 455.4C272.0 450.6 275.4 449.1 280.0 447.0C284.6 444.9 287.8 442.3 291.0 442.8C294.2 443.3 298.2 447.1 299.4 449.8C300.6 452.5 298.6 456.3 298.0 459.0C297.4 461.7 298.3 462.5 296.0 466.0C293.7 469.5 289.7 475.3 284.0 480.0C278.3 484.7 269.3 489.8 262.0 494.0C254.7 498.2 247.0 501.5 240.0 505.0C233.0 508.5 223.3 513.3 220.0 515.0z" fill="none" stroke="#1a1a1a" stroke-width="1.2" opacity="1.00"/>
<path d="M300.0 442.0C296.7 446.7 288.3 460.3 280.0 470.0C271.7 479.7 259.7 490.0 250.0 500.0C240.3 510.0 229.2 521.3 222.0 530.0C214.8 538.7 208.7 542.0 207.0 552.0C205.3 562.0 210.2 577.7 212.0 590.0C213.8 602.3 216.5 613.5 218.0 626.0C219.5 638.5 220.7 652.7 221.0 665.0C221.3 677.3 222.3 686.7 220.0 700.0C217.7 713.3 209.2 737.5 207.0 745.0" fill="none" stroke="#f6f6f6" stroke-width="2.0" transform="translate(1.3 1.3)" opacity=".8"/>
<path d="M300.0 442.0C296.7 446.7 288.3 460.3 280.0 470.0C271.7 479.7 259.7 490.0 250.0 500.0C240.3 510.0 229.2 521.3 222.0 530.0C214.8 538.7 208.7 542.0 207.0 552.0C205.3 562.0 210.2 577.7 212.0 590.0C213.8 602.3 216.5 613.5 218.0 626.0C219.5 638.5 220.7 652.7 221.0 665.0C221.3 677.3 222.3 686.7 220.0 700.0C217.7 713.3 209.2 737.5 207.0 745.0" fill="none" stroke="#1a1a1a" stroke-width="1.6" opacity="1.00"/>
<path d="M256.0 505.0C259.2 507.5 268.8 513.5 275.0 520.0C281.2 526.5 288.3 534.8 293.0 544.0C297.7 553.2 300.0 565.7 303.0 575.0C306.0 584.3 311.5 589.2 311.0 600.0C310.5 610.8 305.5 627.0 300.0 640.0C294.5 653.0 285.5 665.5 278.0 678.0C270.5 690.5 261.8 703.2 255.0 715.0C248.2 726.8 240.0 743.3 237.0 749.0" fill="none" stroke="#f6f6f6" stroke-width="1.9" transform="translate(1.3 1.3)" opacity=".8"/>
<path d="M256.0 505.0C259.2 507.5 268.8 513.5 275.0 520.0C281.2 526.5 288.3 534.8 293.0 544.0C297.7 553.2 300.0 565.7 303.0 575.0C306.0 584.3 311.5 589.2 311.0 600.0C310.5 610.8 305.5 627.0 300.0 640.0C294.5 653.0 285.5 665.5 278.0 678.0C270.5 690.5 261.8 703.2 255.0 715.0C248.2 726.8 240.0 743.3 237.0 749.0" fill="none" stroke="#1a1a1a" stroke-width="1.5" opacity="1.00"/>
<path d="M207.0 552.0C210.0 560.0 218.7 587.8 225.0 600.0C231.3 612.2 238.8 626.7 245.0 625.0C251.2 623.3 256.2 601.7 262.0 590.0C267.8 578.3 274.8 562.7 280.0 555.0C285.2 547.3 290.8 545.8 293.0 544.0" fill="none" stroke="#f6f6f6" stroke-width="1.5" transform="translate(1.3 1.3)" opacity=".8"/>
<path d="M207.0 552.0C210.0 560.0 218.7 587.8 225.0 600.0C231.3 612.2 238.8 626.7 245.0 625.0C251.2 623.3 256.2 601.7 262.0 590.0C267.8 578.3 274.8 562.7 280.0 555.0C285.2 547.3 290.8 545.8 293.0 544.0" fill="none" stroke="#1a1a1a" stroke-width="1.1" opacity="1.00"/>
<path d="M296.5 551.6C297.6 556.3 300.6 571.9 303.0 580.0C305.4 588.1 307.8 593.3 311.0 600.0C314.2 606.7 317.7 613.8 322.0 620.0C326.3 626.2 331.3 630.7 337.0 637.0C342.7 643.3 349.2 651.2 356.0 658.0C362.8 664.8 370.2 671.7 378.0 678.0C385.8 684.3 394.3 690.4 403.0 696.0C411.7 701.6 422.5 708.1 430.0 711.6C437.5 715.1 442.3 715.8 448.0 717.0C453.7 718.2 459.0 718.8 464.0 719.0C469.0 719.2 473.7 718.7 478.0 718.0C482.3 717.3 485.0 718.0 490.0 715.0C495.0 712.0 501.8 705.5 508.0 700.0C514.2 694.5 521.7 687.0 527.0 682.0C532.3 677.0 536.2 673.8 540.0 670.0C543.8 666.2 546.2 664.5 549.5 659.5C552.8 654.5 556.9 646.8 560.0 640.0C563.1 633.2 565.7 626.1 568.0 618.6C570.3 611.1 572.2 603.1 574.0 595.0C575.8 586.9 577.2 579.2 579.0 570.0C580.8 560.8 583.2 549.3 585.0 540.0C586.8 530.7 588.5 521.3 590.0 514.0C591.5 506.7 593.3 499.0 594.0 496.0" fill="none" stroke="#f6f6f6" stroke-width="2.2" transform="translate(1.3 1.3)" opacity=".8"/>
<path d="M296.5 551.6C297.6 556.3 300.6 571.9 303.0 580.0C305.4 588.1 307.8 593.3 311.0 600.0C314.2 606.7 317.7 613.8 322.0 620.0C326.3 626.2 331.3 630.7 337.0 637.0C342.7 643.3 349.2 651.2 356.0 658.0C362.8 664.8 370.2 671.7 378.0 678.0C385.8 684.3 394.3 690.4 403.0 696.0C411.7 701.6 422.5 708.1 430.0 711.6C437.5 715.1 442.3 715.8 448.0 717.0C453.7 718.2 459.0 718.8 464.0 719.0C469.0 719.2 473.7 718.7 478.0 718.0C482.3 717.3 485.0 718.0 490.0 715.0C495.0 712.0 501.8 705.5 508.0 700.0C514.2 694.5 521.7 687.0 527.0 682.0C532.3 677.0 536.2 673.8 540.0 670.0C543.8 666.2 546.2 664.5 549.5 659.5C552.8 654.5 556.9 646.8 560.0 640.0C563.1 633.2 565.7 626.1 568.0 618.6C570.3 611.1 572.2 603.1 574.0 595.0C575.8 586.9 577.2 579.2 579.0 570.0C580.8 560.8 583.2 549.3 585.0 540.0C586.8 530.7 588.5 521.3 590.0 514.0C591.5 506.7 593.3 499.0 594.0 496.0" fill="none" stroke="#1a1a1a" stroke-width="1.8" opacity="1.00"/>
<path d="M549.5 659.5C552.1 661.9 560.1 669.7 565.0 674.0C569.9 678.3 573.5 681.5 579.0 685.5C584.5 689.5 591.8 694.2 598.0 698.0C604.2 701.8 609.4 704.3 616.4 708.0C623.4 711.7 631.6 716.0 640.0 720.0C648.4 724.0 662.2 730.0 666.6 732.0" fill="none" stroke="#f6f6f6" stroke-width="2.2" transform="translate(1.3 1.3)" opacity=".8"/>
<path d="M549.5 659.5C552.1 661.9 560.1 669.7 565.0 674.0C569.9 678.3 573.5 681.5 579.0 685.5C584.5 689.5 591.8 694.2 598.0 698.0C604.2 701.8 609.4 704.3 616.4 708.0C623.4 711.7 631.6 716.0 640.0 720.0C648.4 724.0 662.2 730.0 666.6 732.0" fill="none" stroke="#1a1a1a" stroke-width="1.8" opacity="1.00"/>
<path d="M594.0 496.0C595.0 491.7 597.0 476.8 600.0 470.0C603.0 463.2 607.0 458.3 612.0 455.0C617.0 451.7 630.0 446.7 630.0 450.0C630.0 453.3 612.4 460.0 612.0 475.0C611.6 490.0 622.1 525.3 627.6 540.0C633.1 554.7 638.5 554.8 645.0 563.0C651.5 571.2 663.0 584.7 666.6 589.0" fill="none" stroke="#f6f6f6" stroke-width="1.9" transform="translate(1.3 1.3)" opacity=".8"/>
<path d="M594.0 496.0C595.0 491.7 597.0 476.8 600.0 470.0C603.0 463.2 607.0 458.3 612.0 455.0C617.0 451.7 630.0 446.7 630.0 450.0C630.0 453.3 612.4 460.0 612.0 475.0C611.6 490.0 622.1 525.3 627.6 540.0C633.1 554.7 638.5 554.8 645.0 563.0C651.5 571.2 663.0 584.7 666.6 589.0" fill="none" stroke="#1a1a1a" stroke-width="1.5" opacity="1.00"/>
<path d="M600.0 500.0C605.0 502.5 621.7 510.8 630.0 515.0C638.3 519.2 643.8 521.7 650.0 525.0C656.2 528.3 664.2 533.3 667.0 535.0" fill="none" stroke="#f6f6f6" stroke-width="1.5" transform="translate(1.3 1.3)" opacity=".8"/>
<path d="M600.0 500.0C605.0 502.5 621.7 510.8 630.0 515.0C638.3 519.2 643.8 521.7 650.0 525.0C656.2 528.3 664.2 533.3 667.0 535.0" fill="none" stroke="#1a1a1a" stroke-width="1.1" opacity="1.00"/>
<path d="M363 483Q380 470 400 474T430 486Q410 496 392 496T363 483z" fill="none" stroke="#f6f6f6" stroke-width="1.6" transform="translate(1.3 1.3)" opacity=".8"/>
<path d="M363 483Q380 470 400 474T430 486Q410 496 392 496T363 483z" fill="none" stroke="#1a1a1a" stroke-width="1.2" opacity="1.00"/>
<path d="M512 477Q530 464 548 466T564 468Q552 480 538 482T512 477z" fill="none" stroke="#f6f6f6" stroke-width="1.6" transform="translate(1.3 1.3)" opacity=".8"/>
<path d="M512 477Q530 464 548 466T564 468Q552 480 538 482T512 477z" fill="none" stroke="#1a1a1a" stroke-width="1.2" opacity="1.00"/>
<path d="M372 478Q395 466 424 480" fill="none" stroke="#333" stroke-width="1"/>
<path d="M434.0 570.0C434.7 571.7 436.2 577.5 438.0 580.0C439.8 582.5 441.0 582.7 445.0 585.0C449.0 587.3 456.3 591.2 462.0 594.0C467.7 596.8 473.8 601.8 479.0 602.0C484.2 602.2 488.7 597.8 493.0 595.0C497.3 592.2 501.8 588.3 505.0 585.0C508.2 581.7 510.5 578.1 512.0 575.0C513.5 571.9 513.8 569.3 514.0 566.5C514.2 563.7 513.7 560.2 513.0 558.0C512.3 555.8 510.5 554.2 510.0 553.5" fill="none" stroke="#f6f6f6" stroke-width="2.0" transform="translate(1.3 1.3)" opacity=".8"/>
<path d="M434.0 570.0C434.7 571.7 436.2 577.5 438.0 580.0C439.8 582.5 441.0 582.7 445.0 585.0C449.0 587.3 456.3 591.2 462.0 594.0C467.7 596.8 473.8 601.8 479.0 602.0C484.2 602.2 488.7 597.8 493.0 595.0C497.3 592.2 501.8 588.3 505.0 585.0C508.2 581.7 510.5 578.1 512.0 575.0C513.5 571.9 513.8 569.3 514.0 566.5C514.2 563.7 513.7 560.2 513.0 558.0C512.3 555.8 510.5 554.2 510.0 553.5" fill="none" stroke="#1a1a1a" stroke-width="1.6" opacity="1.00"/>
<path d="M415.5 643.0C419.6 643.3 431.3 644.8 440.0 645.0C448.7 645.2 457.6 645.0 467.6 644.0C477.6 643.0 489.8 641.1 500.0 639.0C510.2 636.9 524.2 632.8 529.0 631.6" fill="none" stroke="#f6f6f6" stroke-width="2.0" transform="translate(1.3 1.3)" opacity=".8"/>
<path d="M415.5 643.0C419.6 643.3 431.3 644.8 440.0 645.0C448.7 645.2 457.6 645.0 467.6 644.0C477.6 643.0 489.8 641.1 500.0 639.0C510.2 636.9 524.2 632.8 529.0 631.6" fill="none" stroke="#1a1a1a" stroke-width="1.6" opacity="1.00"/>
<path d="M445.0 663.0C447.5 663.7 455.0 666.2 460.0 667.0C465.0 667.8 469.7 667.9 475.0 667.7C480.3 667.5 487.0 666.9 492.0 666.0C497.0 665.1 502.8 663.1 505.0 662.5" fill="none" stroke="#f6f6f6" stroke-width="1.5" transform="translate(1.3 1.3)" opacity=".8"/>
<path d="M445.0 663.0C447.5 663.7 455.0 666.2 460.0 667.0C465.0 667.8 469.7 667.9 475.0 667.7C480.3 667.5 487.0 666.9 492.0 666.0C497.0 665.1 502.8 663.1 505.0 662.5" fill="none" stroke="#444" stroke-width="1.1" opacity="0.80"/>
<path d="M438 582Q450 598 479 606Q500 600 512 580Q500 592 479 597Q455 592 438 582z" fill="#555" opacity=".35" filter="url(#glow)"/>
<path d="M418 647Q470 652 528 636Q500 652 468 655Q440 655 418 647z" fill="#444" opacity=".4"/>
<path d="M440 668Q475 676 508 666Q490 684 470 684Q452 682 440 668z" fill="#fff" opacity=".35" filter="url(#glow)"/>
<circle cx="398" cy="485" r="5" fill="none" stroke="#333" stroke-width="1"/><circle cx="540" cy="473" r="4.500" fill="none" stroke="#333" stroke-width="1"/>
<path d="M360 476Q392 462 432 480" fill="none" stroke="#f6f6f6" stroke-width="1.4" transform="translate(1.3 1.3)" opacity=".8"/>
<path d="M360 476Q392 462 432 480" fill="none" stroke="#333" stroke-width="1.0" opacity="0.80"/>
<path d="M508 470Q536 456 566 462" fill="none" stroke="#f6f6f6" stroke-width="1.4" transform="translate(1.3 1.3)" opacity=".8"/>
<path d="M508 470Q536 456 566 462" fill="none" stroke="#333" stroke-width="1.0" opacity="0.80"/>
<path d="M322 350Q319 366 323 370M323 340Q318 340 315 319M295 339Q304 352 293 357M314 322Q325 304 331 296M303 306Q303 320 309 326M315 301Q332 288 335 273M328 297Q334 285 322 262M326 290Q316 308 311 317M309 265Q296 270 291 286M311 260Q327 249 327 224M332 247Q347 229 369 232M330 237Q325 246 330 276M339 232Q330 241 306 251M342 225Q358 215 355 204M360 219Q367 227 359 246M375 217Q347 238 340 236M386 220Q368 218 359 238M386 202Q403 202 415 216M409 204Q397 208 397 234M412 207Q431 215 433 226M428 180Q454 196 461 203M430 198Q432 214 449 213M445 199Q466 186 465 195M458 206Q459 191 482 194M475 178Q495 170 503 181M477 200Q462 218 450 220M502 186Q472 193 458 185M498 194Q523 216 525 218M505 216Q519 234 518 253M519 219Q521 222 521 241M533 223Q538 227 541 241M540 229Q530 256 539 261M555 214Q573 213 574 229M573 228Q571 213 549 217M575 234Q564 258 570 275M572 252Q569 263 580 277M572 270Q567 256 561 256M584 266Q602 276 606 301M591 275Q587 275 598 295M588 295Q588 311 596 311M593 307Q569 327 563 339M595 309Q607 326 614 326M609 321Q622 339 625 342M587 338Q585 316 593 314M590 347Q565 342 564 315M580 349Q558 349 558 328" fill="none" stroke="#fafafa" stroke-width="1.600" transform="translate(1.2 1.2)" opacity=".7"/>
<path d="M322 350Q319 366 323 370M323 340Q318 340 315 319M295 339Q304 352 293 357M314 322Q325 304 331 296M303 306Q303 320 309 326M315 301Q332 288 335 273M328 297Q334 285 322 262M326 290Q316 308 311 317M309 265Q296 270 291 286M311 260Q327 249 327 224M332 247Q347 229 369 232M330 237Q325 246 330 276M339 232Q330 241 306 251M342 225Q358 215 355 204M360 219Q367 227 359 246M375 217Q347 238 340 236M386 220Q368 218 359 238M386 202Q403 202 415 216M409 204Q397 208 397 234M412 207Q431 215 433 226M428 180Q454 196 461 203M430 198Q432 214 449 213M445 199Q466 186 465 195M458 206Q459 191 482 194M475 178Q495 170 503 181M477 200Q462 218 450 220M502 186Q472 193 458 185M498 194Q523 216 525 218M505 216Q519 234 518 253M519 219Q521 222 521 241M533 223Q538 227 541 241M540 229Q530 256 539 261M555 214Q573 213 574 229M573 228Q571 213 549 217M575 234Q564 258 570 275M572 252Q569 263 580 277M572 270Q567 256 561 256M584 266Q602 276 606 301M591 275Q587 275 598 295M588 295Q588 311 596 311M593 307Q569 327 563 339M595 309Q607 326 614 326M609 321Q622 339 625 342M587 338Q585 316 593 314M590 347Q565 342 564 315M580 349Q558 349 558 328" fill="none" stroke="#2e2e2e" stroke-width="1" opacity=".8"/>
<path d="M320 440q12 4 20 -4M330 447q5 -10 17 0M344 462q5 -12 28 2M353 447q11 -1 19 9M364 456q11 3 23 -7M384 435q8 -3 27 5M396 445q14 -6 19 2M404 429q11 -5 28 4M414 427q6 -6 16 4M428 438q8 16 20 -7M447 459q4 12 23 9M456 453q12 -15 14 -6M464 445q4 -12 18 -5M477 469q13 13 14 3M496 452q9 12 28 2M504 457q11 -7 20 5M516 442q9 -4 28 -3M530 451q4 -5 15 2M547 436q13 -11 29 -2M554 433q13 -9 13 -8M568 446q7 5 21 7M579 455q9 16 24 9" fill="none" stroke="#fafafa" stroke-width="1.500" transform="translate(1.2 1.2)" opacity=".7"/>
<path d="M320 440q12 4 20 -4M330 447q5 -10 17 0M344 462q5 -12 28 2M353 447q11 -1 19 9M364 456q11 3 23 -7M384 435q8 -3 27 5M396 445q14 -6 19 2M404 429q11 -5 28 4M414 427q6 -6 16 4M428 438q8 16 20 -7M447 459q4 12 23 9M456 453q12 -15 14 -6M464 445q4 -12 18 -5M477 469q13 13 14 3M496 452q9 12 28 2M504 457q11 -7 20 5M516 442q9 -4 28 -3M530 451q4 -5 15 2M547 436q13 -11 29 -2M554 433q13 -9 13 -8M568 446q7 5 21 7M579 455q9 16 24 9" fill="none" stroke="#333" stroke-width=".9" opacity=".8"/>
<ellipse cx="470" cy="585" rx="40" ry="22" fill="#fff" opacity=".18" filter="url(#glow2)"/>
<ellipse cx="455" cy="392" rx="34" ry="20" fill="#cfcfcf" opacity=".8" filter="url(#glow)"/>
</g>
</g>
</svg>
<!-- ===== Colors panel ===== -->
<div class="a" style="left:1035px;top:84px;width:230px;height:365px;background:#f0f0f0"></div>
<div class="tabbar" style="left:1090px;top:84px;width:155px"><div class="tab" style="left:0;width:69px"></div></div>
<div class="t b" style="left:1044px;top:89px">Colors</div>
<div class="t" style="left:1100px;top:89px">Color Set</div>
<div class="ham" style="left:1250px;top:90px"></div>
<!-- colour wheel -->
<div class="a" style="left:1040px;top:131px;width:220px;height:220px;border-radius:50%;background:conic-gradient(from 0deg,#ff0000,#ff8000 30deg,#ffff00 60deg,#80ff00 90deg,#00ff00 120deg,#00ff80 150deg,#00ffff 180deg,#0080ff 210deg,#0000ff 240deg,#8000ff 270deg,#ff00ff 300deg,#ff0080 330deg,#ff0000 360deg)"></div>
<div class="a" style="left:1059px;top:150px;width:182px;height:182px;border-radius:50%;background:#f0f0f0"></div>
<svg style="left:1100px;top:158px" width="142" height="166" viewBox="0 0 142 166"><defs>
<linearGradient id="tw" x1="5" y1="5" x2="72" y2="122" gradientUnits="userSpaceOnUse"><stop offset="0" stop-color="#fff"/><stop offset="1" stop-color="#fff" stop-opacity="0"/></linearGradient>
<linearGradient id="tk" x1="5" y1="161" x2="72" y2="44" gradientUnits="userSpaceOnUse"><stop offset="0" stop-color="#000"/><stop offset="1" stop-color="#000" stop-opacity="0"/></linearGradient></defs>
<path d="M5 5L138 83L5 161z" fill="#ff0000"/><path d="M5 5L138 83L5 161z" fill="url(#tw)"/><path d="M5 5L138 83L5 161z" fill="url(#tk)"/><path d="M5 5L138 83L5 161z" fill="none" stroke="#999" stroke-opacity=".6" stroke-width="1"/>
<circle cx="5.500" cy="160.500" r="4" fill="#000" stroke="#fff" stroke-width="1.200"/><circle cx="5.500" cy="160.500" r="5" fill="none" stroke="#000" stroke-width="1"/></svg>
<svg style="left:1144px;top:134px" width="12" height="12" viewBox="0 0 12 12"><circle cx="6" cy="6" r="4" fill="none" stroke="#fff" stroke-width="1.300"/><circle cx="6" cy="6" r="5" fill="none" stroke="#5a0000" stroke-opacity=".5" stroke-width=".7"/></svg>
<!-- fg/bg swatches -->
<div class="a" style="left:1040px;top:377px;width:26px;height:26px;background:#fff;border:1px solid #e2e2e2"></div>
<div class="a" style="left:1053px;top:391px;width:27px;height:27px;background:#000;border:1px solid #c8c8c8;box-shadow:inset 0 0 0 1px #fff"></div>
<svg style="left:1068px;top:378px" width="11" height="11" viewBox="0 0 11 11"><rect x="3.500" y="3.500" width="7" height="7" fill="#fff" stroke="#111" stroke-width="1"/><rect x="0" y="0" width="8" height="8" fill="#111"/></svg>
<svg style="left:1040px;top:406px" width="12" height="12" viewBox="0 0 12 12" fill="none" stroke="#223a5e" stroke-width="1.200"><path d="M3 1.500v7.500H10.500"/><path d="M.8 3.800L3 1.300l2.200 2.500M8.300 6.700L10.700 9L8.300 11.300"/></svg>
<svg style="left:1054px;top:427px" width="15" height="15" viewBox="0 0 15 16" fill="#111"><circle cx="7.500" cy="3.300" r="3.200"/><path d="M5.800 5h3.400l.6 4H14a1 1 0 0 1 1 1v2.500H0V10a1 1 0 0 1 1-1h4.200z"/><rect x="1" y="13.700" width="13" height="2"/></svg>
<!-- RGB sliders -->
<div class="t" style="left:1095px;top:382px">R</div>
<div class="t" style="left:1095px;top:406px">G</div>
<div class="t" style="left:1095px;top:430px">B</div>
<div class="a" style="left:1111px;top:385px;width:116px;height:5px;background:linear-gradient(90deg,#000,#ff0000)"></div>
<div class="a" style="left:1111px;top:409px;width:116px;height:5px;background:linear-gradient(90deg,#000,#00e000)"></div>
<div class="a" style="left:1111px;top:433px;width:116px;height:5px;background:linear-gradient(90deg,#000,#0000ff)"></div>
<div class="a" style="left:1111px;top:380px;width:8px;height:16px;background:#f4f4f4;border:1px solid #9a9a9a;border-radius:1px"></div>
<div class="a" style="left:1111px;top:404px;width:8px;height:16px;background:#f4f4f4;border:1px solid #9a9a9a;border-radius:1px"></div>
<div class="a" style="left:1111px;top:428px;width:8px;height:16px;background:#f4f4f4;border:1px solid #9a9a9a;border-radius:1px"></div>
<div class="dd" style="left:1233px;top:377px;width:28px;height:20px;border-color:#dcdcdc"><div class="t" style="left:2px;top:4px">0</div></div>
<div class="dd" style="left:1233px;top:401px;width:28px;height:20px;border-color:#dcdcdc"><div class="t" style="left:2px;top:4px">0</div></div>
<div class="dd" style="left:1233px;top:425px;width:28px;height:20px;border-color:#dcdcdc"><div class="t" style="left:2px;top:4px">0</div></div>
<!-- divider between colors & layers -->
<div class="a" style="left:1035px;top:449px;width:230px;height:4px;background:#dedede"></div>
<!-- ===== Layers panel ===== -->
<div class="a" style="left:1035px;top:453px;width:230px;height:407px;background:#f0f0f0"></div>
<div class="tabbar" style="left:1090px;top:453px;width:155px"><div class="tab" style="left:0;width:59px"></div><div class="tab" style="left:59px;width:74px"></div></div>
<div class="t b" style="left:1044px;top:459px">Layers</div>
<div class="t" style="left:1100px;top:458px">History</div>
<div class="t" style="left:1158px;top:458px">Selections</div>
<div class="ham" style="left:1250px;top:459px"></div>
<div class="dd" style="left:1039px;top:479px;width:107px;height:21px"><div class="t" style="top:4px">Normal</div><svg class="chev" viewBox="0 0 12 8"><path d="M1.500 1.500L6 6l4.500-4.500" fill="none" stroke="#111" stroke-width="1.800"/></svg></div>
<div class="t" style="left:1166px;top:484px">Opacity:</div>
<div class="dd" style="left:1213px;top:479px;width:48px;height:21px"><div class="t" style="top:4px;left:3px">100</div><svg class="chev" style="right:3px" viewBox="0 0 12 8"><path d="M1.500 1.500L6 6l4.500-4.500" fill="none" stroke="#111" stroke-width="1.800"/></svg></div>
<div class="t" style="left:1039px;top:510px">Lock:</div>
<svg style="left:1072px;top:508px" width="14" height="14" viewBox="0 0 14 14" fill="#222"><path d="M7 0l2.600 3h-5.200z M7 14l2.600-3h-5.200z M0 7l3-2.600v5.200z M14 7l-3-2.600v5.200z"/><path d="M7 2.500v9M2.500 7h9" stroke="#222" stroke-width="1.500"/></svg>
<div class="a" style="left:1095px;top:509px;width:12px;height:13px;background:#8c8c8c;background-image:repeating-linear-gradient(90deg,#555 0 1px,transparent 1px 2px),repeating-linear-gradient(#555 0 1px,transparent 1px 2px)"></div>
<svg style="left:1118px;top:508px" width="12" height="14" viewBox="0 0 12 14"><path d="M3 6V4a3 3 0 0 1 6 0v2" fill="none" stroke="#111" stroke-width="1.700"/><rect x=".5" y="5.500" width="11" height="8.500" rx="1.200" fill="#111"/><circle cx="6" cy="9.500" r="1.100" fill="#f0f0f0"/></svg>
<!-- layer list -->
<div class="a" style="left:1035px;top:529px;width:230px;height:308px;background:#e8e8e8"></div>
<div class="a" style="left:1037px;top:531px;width:226px;height:29px;background:#b9d1f4"></div>
<div class="a" style="left:1037px;top:560px;width:226px;height:31px;background:#f0f0f1"></div>
<svg style="left:1043px;top:540px" width="13" height="10" viewBox="0 0 13 10"><path d="M.3 5C2 1.800 4.200.5 6.500.5S11 1.800 12.700 5C11 8.200 8.800 9.500 6.500 9.500S2 8.200.3 5z" fill="#111"/><path d="M1.700 5C3 3 4.700 1.800 6.500 1.800S10 3 11.300 5C10 7 8.300 8.200 6.500 8.200S3 7 1.700 5z" fill="#eef"/><circle cx="6.500" cy="5" r="2.700" fill="#111"/><circle cx="5.500" cy="4" r=".9" fill="#eef"/></svg>
<svg style="left:1043px;top:571px" width="13" height="10" viewBox="0 0 13 10"><path d="M.3 5C2 1.800 4.200.5 6.500.5S11 1.800 12.700 5C11 8.200 8.800 9.500 6.500 9.500S2 8.200.3 5z" fill="#111"/><path d="M1.700 5C3 3 4.700 1.800 6.500 1.800S10 3 11.300 5C10 7 8.300 8.200 6.500 8.200S3 7 1.700 5z" fill="#fff"/><circle cx="6.500" cy="5" r="2.700" fill="#111"/><circle cx="5.500" cy="4" r=".9" fill="#fff"/></svg>
<div class="t" style="left:1067px;top:537px;font-family:'Liberation Serif',serif;font-weight:bold;font-size:17px;line-height:17px;color:#111">T</div>
<div class="t" style="left:1089px;top:540px">NoNaMeClub</div>
<!-- thumbnail -->
<div class="a" style="left:1065px;top:565px;width:30px;height:21px;background:#050a24;overflow:hidden">
<div class="a" style="left:0;top:8px;width:30px;height:3px;background:linear-gradient(90deg,#e8d020,#e04020 30%,#20c030 60%,#30c040)"></div>
<div class="a" style="left:0;top:11px;width:30px;height:3px;background:linear-gradient(90deg,#60c020,#e0c020 30%,#20a050 60%,#20a060)"></div>
<div class="a" style="left:0;top:14px;width:30px;height:4px;background:linear-gradient(90deg,#108050,#1060a0 50%,#084070)"></div>
<div class="a" style="left:5px;top:1px;width:15px;height:18px;background:#c2c2c2;background-image:radial-gradient(#555 30%,transparent 35%);background-size:3px 4px"></div>
</div>
<div class="t" style="left:1103px;top:571px">Background</div>
<svg style="left:1247px;top:570.500px" width="9.500" height="11" viewBox="0 0 12 14"><path d="M3 6V4a3 3 0 0 1 6 0v2" fill="none" stroke="#111" stroke-width="1.700"/><rect x=".5" y="5.500" width="11" height="8.500" rx="1.200" fill="#111"/><circle cx="6" cy="9.500" r="1.100" fill="#f0f0f0"/></svg>
<!-- layers bottom toolbar -->
<div class="a" style="left:1035px;top:837px;width:230px;height:1px;background:#dcdcdc"></div>
<svg style="left:1045px;top:842px" width="180" height="13" viewBox="0 0 180 13">
<path d="M1 10.500L7 3l6 7.500z" fill="#707070"/><path d="M24 3l6 7.500L36 3z" fill="#707070"/>
<path d="M46 2a1 1 0 0 1 1-1h4l1.500 1.500H59a1 1 0 0 1 1 1V11a1 1 0 0 1-1 1H47a1 1 0 0 1-1-1z" fill="#111"/><path d="M47 4h12" stroke="#f0f0f0" stroke-width=".8"/>
<path d="M71.500.5h5.500v3.500h3.700V11.500a1 1 0 0 1-1 1h-8.200a1 1 0 0 1-1-1v-10a1 1 0 0 1 1-1z M78 .5l2.700 2.700H78z" fill="#111"/>
<path d="M93 2.500h3.500V1.300h4V2.500H104v1.500H93z M94 5h9l-.7 7a1 1 0 0 1-1 1h-5.600a1 1 0 0 1-1-1z" fill="#111"/><path d="M96.500 6v5.500M98.500 6v5.500M100.500 6v5.500" stroke="#f0f0f0" stroke-width=".8"/>
<path d="M116 3h4.500v3.500h3.500V12a1 1 0 0 1-1 1h-7a1 1 0 0 1-1-1V4a1 1 0 0 1 1-1z M121 .3h4l3.500 3.300V10a1 1 0 0 1-1 1H125.500V6l-3.300-3.300H120V1.300a1 1 0 0 1 1-1z" fill="#111"/><path d="M125.300 1l2.500 2.500h-2.500z" fill="#f0f0f0"/>
<rect x="139" y="1" width="12" height="12" rx="2" fill="#111"/><path d="M141 11L149 3M141 3.500l2.500 2.500M146.500 8l2.500 2.500" stroke="#f0f0f0" stroke-width="1"/>
<path d="M168 0h2l.4 1.700 1.300.5 1.500-.9 1.400 1.400-.9 1.500.5 1.300 1.700.4v2l-1.700.4-.5 1.300.9 1.500-1.400 1.400-1.500-.9-1.300.5-.4 1.700h-2l-.4-1.700-1.300-.5-1.500.9-1.400-1.400.9-1.500-.5-1.300-1.700-.4v-2l1.700-.4.5-1.300-.9-1.500 1.400-1.400 1.500.9 1.300-.5z" fill="#111"/><circle cx="169" cy="6.900" r="2.100" fill="#f0f0f0"/>
</svg>
<!-- divider between col 1 & col 2 -->
<div class="a" style="left:1265px;top:84px;width:4px;height:776px;background:#dedede"></div>
<!-- ===== Info panel ===== -->
<div class="a" style="left:1269px;top:84px;width:331px;height:119px;background:#f0f0f0"></div>
<div class="tabbar" style="left:1311px;top:84px;width:268px"></div>
<div class="t b" style="left:1278px;top:89px">Info</div>
<div class="ham" style="left:1584px;top:90px"></div>
<svg style="left:1279px;top:127px" width="10" height="12" viewBox="0 0 10 12"><path d="M1 0h4.800v3a.7.700 0 0 0 .7.700H10v7.300a1 1 0 0 1-1 1H1a1 1 0 0 1-1-1V1a1 1 0 0 1 1-1z M6.700 0L10 3H6.700z" fill="#111"/></svg>
<div class="t" style="left:1299px;top:112px">W:</div><div class="t" style="left:1334px;top:112px">1290</div>
<div class="t" style="left:1299px;top:128px">H:</div><div class="t" style="left:1334px;top:128px">900</div>
<div class="t" style="left:1299px;top:144px">Dpi:</div><div class="t" style="left:1334px;top:144px">72</div>
<div class="a" style="left:1434px;top:110px;width:1px;height:90px;background:#dadada"></div>
<div class="a" style="left:1273px;top:161px;width:323px;height:1px;background:#dadada"></div>
<svg style="left:1443px;top:127px" width="13" height="13" viewBox="0 0 16 16"><path d="M10 3.500l2.500 2.500-7 7-3 1-.5-.5 1-3z" fill="#f0f0f0" stroke="#111" stroke-width="1.500"/><path d="M9 2.500l1.500-1.500a2 2 0 0 1 3.500 1a2 2 0 0 1 1 3.500L13.500 7z" fill="#111"/><path d="M8 2.500l5.500 5.500" stroke="#111" stroke-width="1.900"/></svg>
<div class="t" style="left:1465px;top:112px">R:</div>
<div class="t" style="left:1465px;top:128px">G:</div>
<div class="t" style="left:1465px;top:144px">B:</div>
<svg style="left:1278px;top:177px" width="12" height="12" viewBox="0 0 12 12"><circle cx="6" cy="6" r="4.300" fill="none" stroke="#111" stroke-width="1.400"/><circle cx="6" cy="6" r="1.300" fill="#111"/><path d="M6 0v2M6 10v2M0 6h2M10 6h2" stroke="#111" stroke-width="1.200"/></svg>
<div class="t" style="left:1299px;top:170px">X:</div>
<div class="t" style="left:1299px;top:186px">Y:</div>
<svg style="left:1444px;top:177px" width="12" height="12" viewBox="0 0 12 12"><rect x="1" y="1" width="10" height="10" fill="none" stroke="#111" stroke-width="1" stroke-dasharray="2 1.300"/></svg>
<div class="t" style="left:1465px;top:170px">W:</div><div class="t" style="left:1500px;top:170px">646</div>
<div class="t" style="left:1465px;top:186px">H:</div><div class="t" style="left:1500px;top:186px">786</div>
<div class="a" style="left:1269px;top:203px;width:331px;height:4px;background:#dedede"></div>
<!-- ===== Brush panel ===== -->
<div class="a" style="left:1269px;top:207px;width:331px;height:653px;background:#f0f0f0"></div>
<div class="tabbar" style="left:1322px;top:207px;width:257px"><div class="tab" style="left:0;width:73px"></div></div>
<div class="t b" style="left:1279px;top:213px">Brush</div>
<div class="t" style="left:1332px;top:213px">Navigator</div>
<div class="ham" style="left:1584px;top:213px"></div>
<div class="a" style="left:1274px;top:233px;width:92px;height:307px;background:#e8e8e8"></div>
<div class="a" style="left:1274px;top:235px;width:92px;height:19px;background:#b9d1f4"></div>
<div class="t" style="left:1278px;top:239px">General</div>
<div class="t" style="left:1278px;top:258px">Size</div>
<div class="t" style="left:1278px;top:277px">Grain</div>
<div class="t" style="left:1278px;top:296px">Angle</div>
<div class="t" style="left:1278px;top:315px">Spacing</div>
<div class="t" style="left:1278px;top:334px">Stroke</div>
<div class="t" style="left:1278px;top:353px">Blending</div>
<div class="t" style="left:1278px;top:372px">Color</div>
<div class="t" style="left:1278px;top:391px">Jitter</div>
<div class="t" style="left:1278px;top:410px">Clone</div>
<div class="t" style="left:1278px;top:429px">Impasto</div>
<div class="t" style="left:1278px;top:448px">Imagestamp</div>
<div class="t" style="left:1278px;top:467px">Airbrush</div>
<div class="t" style="left:1278px;top:486px">Bristles</div>
<div class="t" style="left:1278px;top:505px">Colorize</div>
<div class="t" style="left:1278px;top:524px">Water</div>
<div class="t" style="left:1371px;top:241px">Type:</div>
<div class="t" style="left:1371px;top:268px">Method:</div>
<div class="t" style="left:1371px;top:295px">Category:</div>
<div class="dd" style="left:1475px;top:236px;width:106px;height:21px"><div class="t" style="top:4px">Circular</div><svg class="chev" style="right:3px" viewBox="0 0 12 8"><path d="M1.500 1.500L6 6l4.500-4.500" fill="none" stroke="#111" stroke-width="1.800"/></svg></div>
<div class="dd" style="left:1475px;top:263px;width:106px;height:21px"><div class="t" style="top:4px">Mild Cover</div><svg class="chev" style="right:3px" viewBox="0 0 12 8"><path d="M1.500 1.500L6 6l4.500-4.500" fill="none" stroke="#111" stroke-width="1.800"/></svg></div>
<div class="dd" style="left:1475px;top:290px;width:106px;height:21px"><div class="t" style="top:4px">Soft</div><svg class="chev" style="right:3px" viewBox="0 0 12 8"><path d="M1.500 1.500L6 6l4.500-4.500" fill="none" stroke="#111" stroke-width="1.800"/></svg></div>
<div class="a" style="left:1372px;top:316px;width:222px;height:1px;background:#dadada"></div>
<div class="t" style="left:1371px;top:328px">Opacity:</div>
<div class="a" style="left:1479px;top:331px;width:67px;height:5px;background:#d4d4d4"></div>
<div class="a" style="left:1536px;top:325px;width:8px;height:16px;background:#f6f6f6;border:1px solid #9a9a9a;border-radius:1px"></div>
<div class="dd" style="left:1553px;top:323px;width:28px;height:21px;border-color:#dcdcdc"><div class="t" style="left:2px;top:4px">100</div></div>
<div class="t" style="left:1585px;top:328px">%</div>
<div class="t" style="left:1371px;top:355px">Expression:</div>
<div class="a" style="left:1475px;top:350px;width:39px;height:21px;background:#fdfdfd;border:1px solid #d0d0d0"></div>
<div class="a" style="left:1476px;top:351px;width:21px;height:19px;background:#ececec;border-right:1px solid #d0d0d0"></div>
<svg style="left:1479px;top:353px" width="15" height="15" viewBox="0 0 15 15" fill="none" stroke="#111"><circle cx="7.500" cy="7.500" r="6.300" stroke-width="1.700"/><circle cx="7.500" cy="7.500" r="3.300" stroke-width="1.500"/><circle cx="7.500" cy="7.500" r="1.200" fill="#111" stroke="none"/><path d="M7.500 7.500L14.500.5" stroke="#ececec" stroke-width="2.500"/><path d="M7.500 7.500L13.800 1.200" stroke-width="1.200"/></svg>
<svg style="left:1499px;top:356px" width="12" height="8" viewBox="0 0 12 8"><path d="M1.500 1.500L6 6l4.500-4.500" fill="none" stroke="#111" stroke-width="1.800"/></svg>
<svg style="left:1517px;top:355px" width="13" height="12" viewBox="0 0 13 12"><rect x=".5" y=".5" width="12" height="11" fill="#e4e4e4" stroke="#a8a8a8"/><rect x="3" y="4" width="5" height="5" fill="#c8c8c8" stroke="#a8a8a8" stroke-width=".8"/><path d="M6 7l4-4" stroke="#b0b0b0" stroke-width="1"/></svg>
<div class="a" style="left:1372px;top:376px;width:222px;height:1px;background:#dadada"></div>
<div class="a" style="left:1372px;top:387px;width:13px;height:13px;background:#6b6b6b"></div>
<svg style="left:1372px;top:387px" width="13" height="13" viewBox="0 0 13 13"><path d="M2.800 6.500l2.700 2.700l5-5.500" fill="none" stroke="#fff" stroke-width="1.800"/></svg>
<div class="t" style="left:1390px;top:388px">Anti-aliased</div>
<!-- previews -->
<div class="a" style="left:1273px;top:545px;width:70px;height:69px;background:#fdfdfd;border:1px solid #d8d8d8"></div>
<div class="a" style="left:1307px;top:578px;width:1px;height:1px;background:#333"></div>
<div class="a" style="left:1347px;top:545px;width:248px;height:69px;background:#fdfdfd;border:1px solid #d8d8d8"></div>
<svg style="left:1347px;top:545px" width="248" height="69" viewBox="0 0 248 69"><defs><linearGradient id="bs" x1="0" x2="1" y1="0" y2="0"><stop offset="0" stop-color="#444" stop-opacity="0"/><stop offset=".25" stop-color="#444" stop-opacity=".8"/><stop offset=".55" stop-color="#222" stop-opacity="1"/><stop offset=".8" stop-color="#555" stop-opacity=".7"/><stop offset="1" stop-color="#666" stop-opacity="0"/></linearGradient></defs><path d="M43 36C75 52 100 48 130 34S190 18 224 34" fill="none" stroke="url(#bs)" stroke-width="1.500"/></svg>
<!-- window edges -->
<div class="a" style="left:0;top:858px;width:1600px;height:2px;background:#e4e4e4"></div>
<div class="a" style="left:1598px;top:46px;width:2px;height:814px;background:#e2e2e2"></div>
<!-- ===== Layer Properties dialog ===== -->
<div class="a" style="left:619px;top:166px;width:389px;height:332px;border-radius:8px;background:#f0f0f0;box-shadow:0 3px 12px rgba(0,0,0,.4),0 0 3px rgba(0,0,0,.3);overflow:hidden">
<div class="a" style="left:0;top:0;width:389px;height:30px;background:#0078d4"></div>
<div class="t" style="left:8px;top:10px;color:#fff;letter-spacing:-.25px">Layer Properties</div>
<!-- Position group -->
<div class="a" style="left:10px;top:48px;width:264px;height:127px;border:1px solid #dcdcdc"></div>
<div class="a" style="left:22px;top:40px;width:52px;height:16px;background:#f0f0f0"></div>
<div class="t" style="left:27px;top:42px">Position</div>
<div class="t" style="left:16px;top:65px">X:</div>
<div class="t" style="left:16px;top:94px">Y:</div>
<div class="t" style="left:16px;top:123px">Width:</div>
<div class="t" style="left:16px;top:152px">Height:</div>
<div class="dd" style="left:86px;top:59px;width:75px;height:22px"><div class="t" style="top:5px;left:2px">892</div><svg class="chev" style="right:3px" viewBox="0 0 12 8"><path d="M1.500 1.500L6 6l4.500-4.500" fill="none" stroke="#111" stroke-width="1.800"/></svg></div>
<div class="dd" style="left:166px;top:59px;width:100px;height:22px"><div class="t" style="top:5px">pixels</div><svg class="chev" style="right:3px" viewBox="0 0 12 8"><path d="M1.500 1.500L6 6l4.500-4.500" fill="none" stroke="#111" stroke-width="1.800"/></svg></div>
<div class="dd" style="left:86px;top:88px;width:75px;height:22px"><div class="t" style="top:5px;left:2px">40</div><svg class="chev" style="right:3px" viewBox="0 0 12 8"><path d="M1.500 1.500L6 6l4.500-4.500" fill="none" stroke="#111" stroke-width="1.800"/></svg></div>
<div class="dd" style="left:166px;top:88px;width:100px;height:22px"><div class="t" style="top:5px">pixels</div><svg class="chev" style="right:3px" viewBox="0 0 12 8"><path d="M1.500 1.500L6 6l4.500-4.500" fill="none" stroke="#111" stroke-width="1.800"/></svg></div>
<div class="t" style="left:86px;top:123px">215 pixels</div>
<div class="t" style="left:86px;top:152px">55 pixels</div>
<!-- General group -->
<div class="a" style="left:10px;top:194px;width:264px;height:128px;border:1px solid #dcdcdc"></div>
<div class="a" style="left:22px;top:186px;width:50px;height:16px;background:#f0f0f0"></div>
<div class="t" style="left:27px;top:188px">General</div>
<div class="t" style="left:16px;top:211px">Name:</div>
<div class="t" style="left:16px;top:240px">Blend:</div>
<div class="t" style="left:16px;top:269px">Opacity:</div>
<div class="t" style="left:16px;top:298px">Color:</div>
<div class="dd" style="left:86px;top:205px;width:180px;height:22px"><div class="t" style="top:5px;left:1px">NoNaMeClub</div></div>
<div class="dd" style="left:86px;top:234px;width:180px;height:22px"><div class="t" style="top:5px">Normal</div><svg class="chev" style="right:3px" viewBox="0 0 12 8"><path d="M1.500 1.500L6 6l4.500-4.500" fill="none" stroke="#111" stroke-width="1.800"/></svg></div>
<div class="a" style="left:90px;top:272px;width:139px;height:5px;background:#d4d4d4"></div>
<div class="a" style="left:219px;top:266px;width:8px;height:16px;background:#f6f6f6;border:1px solid #9a9a9a;border-radius:1px"></div>
<div class="dd" style="left:236px;top:263px;width:30px;height:22px;border-color:#dcdcdc"><div class="t" style="left:2px;top:5px">100</div></div>
<div class="dd" style="left:86px;top:292px;width:180px;height:22px"><div class="t" style="top:5px">None</div><svg class="chev" style="right:3px" viewBox="0 0 12 8"><path d="M1.500 1.500L6 6l4.500-4.500" fill="none" stroke="#111" stroke-width="1.800"/></svg></div>
<!-- buttons -->
<div class="a" style="left:292px;top:37px;width:88px;height:22px;background:#fdfdfd;border:1px solid #d0d0d0"></div>
<div class="t" style="left:292px;top:43px;width:88px;text-align:center">OK</div>
<div class="a" style="left:292px;top:64px;width:88px;height:22px;background:#fdfdfd;border:1px solid #d0d0d0"></div>
<div class="t" style="left:292px;top:70px;width:88px;text-align:center">Cancel</div>
<div class="a" style="left:0;top:0;width:389px;height:332px;border:1px solid #2f8fe4;border-radius:8px"></div>
<div class="a" style="left:0;top:30px;width:389px;height:302px;border:1px solid #d2eafb;border-top:none;border-radius:0 0 8px 8px"></div>
</div>
</body>
</html>
